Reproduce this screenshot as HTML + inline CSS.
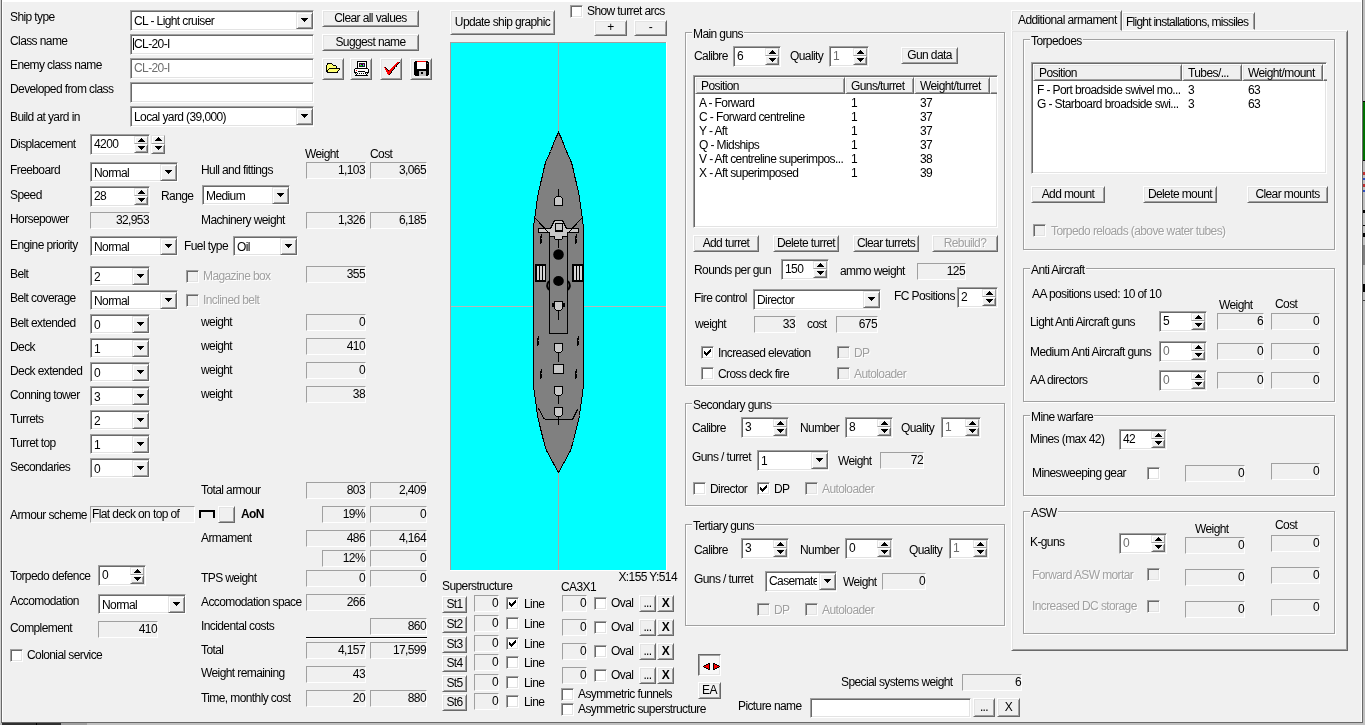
<!DOCTYPE html><html><head><meta charset="utf-8"><style>
html,body{margin:0;padding:0;width:1365px;height:725px;overflow:hidden;background:#f0f0f0;position:relative}
.a{position:absolute;box-sizing:border-box}
.t{position:absolute;font-family:"Liberation Sans",sans-serif;font-size:12px;line-height:13px;white-space:nowrap;color:#000;letter-spacing:-0.6px}
#w{position:absolute;left:0;top:0;width:1365px;height:725px;will-change:transform}
</style></head><body><div id="w">
<div class="a" style="left:0px;top:0px;width:1px;height:725px;background:#d0d0d0;"></div>
<div class="a" style="left:1px;top:0px;width:1px;height:723px;background:#696969;"></div>
<div class="a" style="left:2px;top:0px;width:1px;height:722px;background:#ffffff;"></div>
<div class="a" style="left:2px;top:0px;width:1360px;height:2px;background:#ffffff;"></div>
<div class="a" style="left:1361px;top:0px;width:1px;height:722px;background:#ffffff;"></div>
<div class="a" style="left:1362px;top:0px;width:1px;height:723px;background:#696969;"></div>
<div class="a" style="left:1363px;top:0px;width:2px;height:725px;background:#c0c0c0;"></div>
<div class="a" style="left:1363px;top:101px;width:2px;height:1px;background:#000;"></div>
<div class="a" style="left:1363px;top:102px;width:2px;height:58px;background:#007000;"></div>
<div class="a" style="left:1363px;top:160px;width:2px;height:1px;background:#000;"></div>
<div class="a" style="left:1363px;top:172px;width:2px;height:3px;background:#c03030;"></div>
<div class="a" style="left:1363px;top:178px;width:2px;height:2px;background:#3050c0;"></div>
<div class="a" style="left:1363px;top:184px;width:2px;height:3px;background:#c03030;"></div>
<div class="a" style="left:1363px;top:190px;width:2px;height:2px;background:#3050c0;"></div>
<div class="a" style="left:1363px;top:210px;width:2px;height:3px;background:#000;"></div>
<div class="a" style="left:1363px;top:225px;width:2px;height:1px;background:#000;"></div>
<div class="a" style="left:1363px;top:233px;width:2px;height:4px;background:#000;"></div>
<div class="a" style="left:1363px;top:245px;width:2px;height:20px;background:#808080;"></div>
<div class="a" style="left:1363px;top:284px;width:2px;height:8px;background:#000;"></div>
<div class="a" style="left:1363px;top:300px;width:2px;height:1px;background:#404040;"></div>
<div class="a" style="left:1px;top:722px;width:1362px;height:1px;background:#696969;"></div>
<div class="a" style="left:0px;top:723px;width:1363px;height:2px;background:#c0c0c0;"></div>
<div class="a" style="left:2px;top:723px;width:60px;height:2px;background:#303030;"></div>
<div class="a" style="left:36px;top:723px;width:1px;height:2px;background:#000;"></div>
<div class="a" style="left:61px;top:723px;width:26px;height:2px;background:#a0a0a0;"></div>
<div class="t" style="left:10px;top:11px;color:#000;">Ship type</div>
<div class="t" style="left:10px;top:35px;color:#000;">Class name</div>
<div class="t" style="left:10px;top:59px;color:#000;">Enemy class name</div>
<div class="t" style="left:10px;top:83px;color:#000;">Developed from class</div>
<div class="t" style="left:10px;top:111px;color:#000;">Build at yard in</div>
<div class="t" style="left:10px;top:138px;color:#000;">Displacement</div>
<div class="t" style="left:10px;top:164px;color:#000;">Freeboard</div>
<div class="t" style="left:10px;top:189px;color:#000;">Speed</div>
<div class="t" style="left:10px;top:213px;color:#000;">Horsepower</div>
<div class="t" style="left:10px;top:239px;color:#000;">Engine priority</div>
<div class="t" style="left:10px;top:268px;color:#000;">Belt</div>
<div class="t" style="left:10px;top:292px;color:#000;">Belt coverage</div>
<div class="t" style="left:10px;top:317px;color:#000;">Belt extended</div>
<div class="t" style="left:10px;top:341px;color:#000;">Deck</div>
<div class="t" style="left:10px;top:365px;color:#000;">Deck extended</div>
<div class="t" style="left:10px;top:389px;color:#000;">Conning tower</div>
<div class="t" style="left:10px;top:413px;color:#000;">Turrets</div>
<div class="t" style="left:10px;top:437px;color:#000;">Turret top</div>
<div class="t" style="left:10px;top:461px;color:#000;">Secondaries</div>
<div class="t" style="left:10px;top:509px;color:#000;">Armour scheme</div>
<div class="t" style="left:10px;top:570px;color:#000;">Torpedo defence</div>
<div class="t" style="left:10px;top:595px;color:#000;">Accomodation</div>
<div class="t" style="left:10px;top:622px;color:#000;">Complement</div>
<div class="a" style="left:130px;top:10px;width:184px;height:21px;border:1px solid;border-color:#a0a0a0 #ffffff #ffffff #a0a0a0;box-shadow:inset 1px 1px 0 #696969,inset -1px -1px 0 #e3e3e3;background:#fff;"></div>
<div class="a" style="left:296px;top:12px;width:17px;height:17px;border:1px solid;border-color:#e3e3e3 #696969 #696969 #e3e3e3;box-shadow:inset 1px 1px 0 #ffffff,inset -1px -1px 0 #a0a0a0;background:#f0f0f0;"></div>
<div class="a" style="left:301px;top:18px;width:7px;height:1px;background:#000;"></div>
<div class="a" style="left:302px;top:19px;width:5px;height:1px;background:#000;"></div>
<div class="a" style="left:303px;top:20px;width:3px;height:1px;background:#000;"></div>
<div class="a" style="left:304px;top:21px;width:1px;height:1px;background:#000;"></div>
<div class="t" style="left:134px;top:15px;color:#000;">CL - Light cruiser</div>
<div class="a" style="left:130px;top:34px;width:184px;height:21px;border:1px solid;border-color:#a0a0a0 #ffffff #ffffff #a0a0a0;box-shadow:inset 1px 1px 0 #696969,inset -1px -1px 0 #e3e3e3;background:#fff;"></div>
<div class="t" style="left:134px;top:38px;color:#000;">CL-20-I</div>
<div class="a" style="left:133px;top:38px;width:1px;height:12px;background:#000;"></div>
<div class="a" style="left:130px;top:58px;width:184px;height:21px;border:1px solid;border-color:#a0a0a0 #ffffff #ffffff #a0a0a0;box-shadow:inset 1px 1px 0 #696969,inset -1px -1px 0 #e3e3e3;background:#fff;"></div>
<div class="t" style="left:134px;top:62px;color:#6d6d6d;">CL-20-I</div>
<div class="a" style="left:130px;top:82px;width:184px;height:21px;border:1px solid;border-color:#a0a0a0 #ffffff #ffffff #a0a0a0;box-shadow:inset 1px 1px 0 #696969,inset -1px -1px 0 #e3e3e3;background:#fff;"></div>
<div class="a" style="left:130px;top:106px;width:184px;height:21px;border:1px solid;border-color:#a0a0a0 #ffffff #ffffff #a0a0a0;box-shadow:inset 1px 1px 0 #696969,inset -1px -1px 0 #e3e3e3;background:#fff;"></div>
<div class="a" style="left:296px;top:108px;width:17px;height:17px;border:1px solid;border-color:#e3e3e3 #696969 #696969 #e3e3e3;box-shadow:inset 1px 1px 0 #ffffff,inset -1px -1px 0 #a0a0a0;background:#f0f0f0;"></div>
<div class="a" style="left:301px;top:114px;width:7px;height:1px;background:#000;"></div>
<div class="a" style="left:302px;top:115px;width:5px;height:1px;background:#000;"></div>
<div class="a" style="left:303px;top:116px;width:3px;height:1px;background:#000;"></div>
<div class="a" style="left:304px;top:117px;width:1px;height:1px;background:#000;"></div>
<div class="t" style="left:134px;top:111px;color:#000;">Local yard (39,000)</div>
<div class="a" style="left:322px;top:10px;width:97px;height:17px;border:1px solid;border-color:#ffffff #696969 #696969 #ffffff;box-shadow:inset 1px 1px 0 #e3e3e3,inset -1px -1px 0 #a0a0a0;background:#f0f0f0;"></div>
<div class="t" style="left:322px;top:12px;width:97px;text-align:center;color:#000;">Clear all values</div>
<div class="a" style="left:322px;top:34px;width:97px;height:17px;border:1px solid;border-color:#ffffff #696969 #696969 #ffffff;box-shadow:inset 1px 1px 0 #e3e3e3,inset -1px -1px 0 #a0a0a0;background:#f0f0f0;"></div>
<div class="t" style="left:322px;top:36px;width:97px;text-align:center;color:#000;">Suggest name</div>
<div class="a" style="left:322px;top:58px;width:22px;height:22px;border:1px solid;border-color:#ffffff #696969 #696969 #ffffff;box-shadow:inset 1px 1px 0 #e3e3e3,inset -1px -1px 0 #a0a0a0;background:#f0f0f0;"></div>
<div class="a" style="left:350px;top:58px;width:22px;height:22px;border:1px solid;border-color:#ffffff #696969 #696969 #ffffff;box-shadow:inset 1px 1px 0 #e3e3e3,inset -1px -1px 0 #a0a0a0;background:#f0f0f0;"></div>
<div class="a" style="left:380px;top:58px;width:22px;height:22px;border:1px solid;border-color:#ffffff #696969 #696969 #ffffff;box-shadow:inset 1px 1px 0 #e3e3e3,inset -1px -1px 0 #a0a0a0;background:#f0f0f0;"></div>
<div class="a" style="left:410px;top:58px;width:22px;height:22px;border:1px solid;border-color:#ffffff #696969 #696969 #ffffff;box-shadow:inset 1px 1px 0 #e3e3e3,inset -1px -1px 0 #a0a0a0;background:#f0f0f0;"></div>
<svg class="a" style="left:326px;top:63px" width="15" height="10" shape-rendering="crispEdges"><rect x="1" y="0" width="5" height="1" fill="#000"/><rect x="1" y="1" width="1" height="1" fill="#000"/><rect x="2" y="1" width="4" height="1" fill="#ffff70"/><rect x="6" y="1" width="1" height="1" fill="#000"/><rect x="0" y="2" width="1" height="1" fill="#000"/><rect x="1" y="2" width="6" height="1" fill="#ffff70"/><rect x="7" y="2" width="3" height="1" fill="#000"/><rect x="0" y="3" width="1" height="1" fill="#000"/><rect x="1" y="3" width="9" height="1" fill="#ffff70"/><rect x="10" y="3" width="1" height="1" fill="#000"/><rect x="0" y="4" width="1" height="1" fill="#000"/><rect x="1" y="4" width="9" height="1" fill="#ffff70"/><rect x="10" y="4" width="1" height="1" fill="#000"/><rect x="0" y="5" width="1" height="1" fill="#000"/><rect x="1" y="5" width="2" height="1" fill="#ffff70"/><rect x="3" y="5" width="11" height="1" fill="#000"/><rect x="0" y="6" width="1" height="1" fill="#000"/><rect x="1" y="6" width="1" height="1" fill="#ffff70"/><rect x="2" y="6" width="1" height="1" fill="#000"/><rect x="3" y="6" width="10" height="1" fill="#ffff70"/><rect x="13" y="6" width="1" height="1" fill="#000"/><rect x="0" y="7" width="2" height="1" fill="#000"/><rect x="2" y="7" width="10" height="1" fill="#ffff70"/><rect x="12" y="7" width="1" height="1" fill="#000"/><rect x="0" y="8" width="2" height="1" fill="#000"/><rect x="2" y="8" width="9" height="1" fill="#ffff70"/><rect x="11" y="8" width="1" height="1" fill="#000"/><rect x="1" y="9" width="11" height="1" fill="#000"/></svg>
<svg class="a" style="left:354px;top:61px" width="15" height="15" shape-rendering="crispEdges"><rect x="3" y="0" width="10" height="1" fill="#000"/><rect x="3" y="1" width="1" height="1" fill="#000"/><rect x="4" y="1" width="8" height="1" fill="#fff"/><rect x="12" y="1" width="1" height="1" fill="#000"/><rect x="3" y="2" width="1" height="1" fill="#000"/><rect x="4" y="2" width="1" height="1" fill="#fff"/><rect x="5" y="2" width="6" height="1" fill="#202020"/><rect x="11" y="2" width="1" height="1" fill="#fff"/><rect x="12" y="2" width="1" height="1" fill="#000"/><rect x="3" y="3" width="1" height="1" fill="#000"/><rect x="4" y="3" width="1" height="1" fill="#fff"/><rect x="5" y="3" width="1" height="1" fill="#202020"/><rect x="6" y="3" width="1" height="1" fill="#ff00ff"/><rect x="7" y="3" width="2" height="1" fill="#202020"/><rect x="9" y="3" width="1" height="1" fill="#ff00ff"/><rect x="10" y="3" width="1" height="1" fill="#202020"/><rect x="11" y="3" width="1" height="1" fill="#fff"/><rect x="12" y="3" width="1" height="1" fill="#000"/><rect x="3" y="4" width="1" height="1" fill="#000"/><rect x="4" y="4" width="1" height="1" fill="#fff"/><rect x="5" y="4" width="1" height="1" fill="#202020"/><rect x="6" y="4" width="2" height="1" fill="#00ff00"/><rect x="8" y="4" width="1" height="1" fill="#202020"/><rect x="9" y="4" width="1" height="1" fill="#00ffff"/><rect x="10" y="4" width="1" height="1" fill="#202020"/><rect x="11" y="4" width="1" height="1" fill="#fff"/><rect x="12" y="4" width="1" height="1" fill="#000"/><rect x="3" y="5" width="1" height="1" fill="#000"/><rect x="4" y="5" width="1" height="1" fill="#fff"/><rect x="5" y="5" width="6" height="1" fill="#202020"/><rect x="11" y="5" width="1" height="1" fill="#fff"/><rect x="12" y="5" width="1" height="1" fill="#000"/><rect x="3" y="6" width="1" height="1" fill="#000"/><rect x="4" y="6" width="8" height="1" fill="#fff"/><rect x="12" y="6" width="1" height="1" fill="#000"/><rect x="1" y="7" width="13" height="1" fill="#000"/><rect x="0" y="8" width="1" height="1" fill="#000"/><rect x="1" y="8" width="13" height="1" fill="#fff"/><rect x="14" y="8" width="1" height="1" fill="#000"/><rect x="0" y="9" width="1" height="1" fill="#000"/><rect x="1" y="9" width="1" height="1" fill="#fff"/><rect x="2" y="9" width="1" height="1" fill="#ff0000"/><rect x="3" y="9" width="11" height="1" fill="#fff"/><rect x="14" y="9" width="1" height="1" fill="#000"/><rect x="0" y="10" width="1" height="1" fill="#000"/><rect x="1" y="10" width="3" height="1" fill="#fff"/><rect x="4" y="10" width="7" height="1" fill="#000"/><rect x="11" y="10" width="3" height="1" fill="#fff"/><rect x="14" y="10" width="1" height="1" fill="#000"/><rect x="0" y="11" width="3" height="1" fill="#000"/><rect x="3" y="11" width="8" height="1" fill="#fff"/><rect x="11" y="11" width="4" height="1" fill="#000"/><rect x="1" y="12" width="1" height="1" fill="#000"/><rect x="2" y="12" width="1" height="1" fill="#fff"/><rect x="3" y="12" width="1" height="1" fill="#000"/><rect x="4" y="12" width="1" height="1" fill="#fff"/><rect x="5" y="12" width="1" height="1" fill="#000"/><rect x="6" y="12" width="1" height="1" fill="#fff"/><rect x="7" y="12" width="1" height="1" fill="#000"/><rect x="8" y="12" width="1" height="1" fill="#fff"/><rect x="9" y="12" width="1" height="1" fill="#000"/><rect x="10" y="12" width="1" height="1" fill="#fff"/><rect x="11" y="12" width="1" height="1" fill="#000"/><rect x="12" y="12" width="1" height="1" fill="#fff"/><rect x="13" y="12" width="1" height="1" fill="#000"/><rect x="2" y="13" width="1" height="1" fill="#000"/><rect x="3" y="13" width="9" height="1" fill="#fff"/><rect x="12" y="13" width="1" height="1" fill="#000"/><rect x="1" y="14" width="13" height="1" fill="#000"/></svg>
<svg class="a" style="left:384px;top:62px" width="16" height="13" shape-rendering="crispEdges"><rect x="13" y="0" width="2" height="1" fill="#ff0000"/><rect x="15" y="0" width="1" height="1" fill="#000"/><rect x="12" y="1" width="2" height="1" fill="#ff0000"/><rect x="14" y="1" width="1" height="1" fill="#000"/><rect x="11" y="2" width="2" height="1" fill="#ff0000"/><rect x="13" y="2" width="1" height="1" fill="#000"/><rect x="10" y="3" width="2" height="1" fill="#ff0000"/><rect x="12" y="3" width="1" height="1" fill="#000"/><rect x="9" y="4" width="3" height="1" fill="#ff0000"/><rect x="12" y="4" width="1" height="1" fill="#000"/><rect x="0" y="5" width="1" height="1" fill="#ff0000"/><rect x="1" y="5" width="1" height="1" fill="#000"/><rect x="8" y="5" width="2" height="1" fill="#ff0000"/><rect x="10" y="5" width="1" height="1" fill="#000"/><rect x="1" y="6" width="1" height="1" fill="#ff0000"/><rect x="2" y="6" width="1" height="1" fill="#000"/><rect x="7" y="6" width="3" height="1" fill="#ff0000"/><rect x="10" y="6" width="1" height="1" fill="#000"/><rect x="1" y="7" width="2" height="1" fill="#ff0000"/><rect x="3" y="7" width="1" height="1" fill="#000"/><rect x="6" y="7" width="3" height="1" fill="#ff0000"/><rect x="9" y="7" width="1" height="1" fill="#000"/><rect x="2" y="8" width="2" height="1" fill="#ff0000"/><rect x="4" y="8" width="1" height="1" fill="#000"/><rect x="5" y="8" width="3" height="1" fill="#ff0000"/><rect x="8" y="8" width="1" height="1" fill="#000"/><rect x="2" y="9" width="5" height="1" fill="#ff0000"/><rect x="7" y="9" width="1" height="1" fill="#000"/><rect x="3" y="10" width="4" height="1" fill="#ff0000"/><rect x="7" y="10" width="1" height="1" fill="#000"/><rect x="3" y="11" width="3" height="1" fill="#ff0000"/><rect x="6" y="11" width="1" height="1" fill="#000"/><rect x="4" y="12" width="1" height="1" fill="#ff0000"/><rect x="5" y="12" width="1" height="1" fill="#000"/></svg>
<svg class="a" style="left:414px;top:61px" width="15" height="15" shape-rendering="crispEdges"><rect x="1" y="0" width="2" height="1" fill="#000"/><rect x="3" y="0" width="9" height="1" fill="#ff0000"/><rect x="12" y="0" width="2" height="1" fill="#000"/><rect x="0" y="1" width="3" height="1" fill="#000"/><rect x="3" y="1" width="9" height="1" fill="#fff"/><rect x="12" y="1" width="3" height="1" fill="#000"/><rect x="0" y="2" width="3" height="1" fill="#000"/><rect x="3" y="2" width="9" height="1" fill="#fff"/><rect x="12" y="2" width="1" height="1" fill="#000"/><rect x="13" y="2" width="1" height="1" fill="#808080"/><rect x="14" y="2" width="1" height="1" fill="#000"/><rect x="0" y="3" width="3" height="1" fill="#000"/><rect x="3" y="3" width="9" height="1" fill="#fff"/><rect x="12" y="3" width="3" height="1" fill="#000"/><rect x="0" y="4" width="3" height="1" fill="#000"/><rect x="3" y="4" width="9" height="1" fill="#fff"/><rect x="12" y="4" width="3" height="1" fill="#000"/><rect x="0" y="5" width="3" height="1" fill="#000"/><rect x="3" y="5" width="9" height="1" fill="#fff"/><rect x="12" y="5" width="3" height="1" fill="#000"/><rect x="0" y="6" width="3" height="1" fill="#000"/><rect x="3" y="6" width="9" height="1" fill="#fff"/><rect x="12" y="6" width="3" height="1" fill="#000"/><rect x="0" y="7" width="3" height="1" fill="#000"/><rect x="3" y="7" width="9" height="1" fill="#fff"/><rect x="12" y="7" width="3" height="1" fill="#000"/><rect x="0" y="8" width="15" height="1" fill="#000"/><rect x="0" y="9" width="15" height="1" fill="#000"/><rect x="0" y="10" width="5" height="1" fill="#000"/><rect x="5" y="10" width="7" height="1" fill="#c0c0c0"/><rect x="12" y="10" width="3" height="1" fill="#000"/><rect x="0" y="11" width="5" height="1" fill="#000"/><rect x="5" y="11" width="2" height="1" fill="#c0c0c0"/><rect x="7" y="11" width="2" height="1" fill="#000"/><rect x="9" y="11" width="3" height="1" fill="#c0c0c0"/><rect x="12" y="11" width="3" height="1" fill="#000"/><rect x="0" y="12" width="5" height="1" fill="#000"/><rect x="5" y="12" width="2" height="1" fill="#c0c0c0"/><rect x="7" y="12" width="2" height="1" fill="#000"/><rect x="9" y="12" width="3" height="1" fill="#c0c0c0"/><rect x="12" y="12" width="3" height="1" fill="#000"/><rect x="0" y="13" width="5" height="1" fill="#000"/><rect x="5" y="13" width="7" height="1" fill="#c0c0c0"/><rect x="12" y="13" width="3" height="1" fill="#000"/><rect x="1" y="14" width="4" height="1" fill="#000"/><rect x="5" y="14" width="7" height="1" fill="#c0c0c0"/><rect x="12" y="14" width="2" height="1" fill="#000"/></svg>
<div class="a" style="left:90px;top:134px;width:60px;height:21px;border:1px solid;border-color:#a0a0a0 #ffffff #ffffff #a0a0a0;box-shadow:inset 1px 1px 0 #696969,inset -1px -1px 0 #e3e3e3;background:#fff;"></div>
<div class="a" style="left:134px;top:136px;width:14px;height:8px;border:1px solid;border-color:#e3e3e3 #a0a0a0 #a0a0a0 #e3e3e3;box-shadow:inset 1px 1px 0 #ffffff,inset -1px -1px 0 #f0f0f0;background:#f0f0f0;"></div>
<div class="a" style="left:141px;top:138px;width:1px;height:1px;background:#000;"></div>
<div class="a" style="left:140px;top:139px;width:3px;height:1px;background:#000;"></div>
<div class="a" style="left:139px;top:140px;width:5px;height:1px;background:#000;"></div>
<div class="a" style="left:138px;top:141px;width:7px;height:1px;background:#000;"></div>
<div class="a" style="left:134px;top:144px;width:14px;height:9px;border:1px solid;border-color:#ffffff #696969 #696969 #ffffff;box-shadow:inset 1px 1px 0 #f0f0f0,inset -1px -1px 0 #a0a0a0;background:#f0f0f0;"></div>
<div class="a" style="left:138px;top:146px;width:7px;height:1px;background:#000;"></div>
<div class="a" style="left:139px;top:147px;width:5px;height:1px;background:#000;"></div>
<div class="a" style="left:140px;top:148px;width:3px;height:1px;background:#000;"></div>
<div class="a" style="left:141px;top:149px;width:1px;height:1px;background:#000;"></div>
<div class="t" style="left:94px;top:138px;color:#000;">4200</div>
<div class="a" style="left:151px;top:135px;width:14px;height:9px;border:1px solid;border-color:#e3e3e3 #a0a0a0 #a0a0a0 #e3e3e3;box-shadow:inset 1px 1px 0 #ffffff,inset -1px -1px 0 #f0f0f0;background:#f0f0f0;"></div>
<div class="a" style="left:158px;top:137px;width:1px;height:1px;background:#000;"></div>
<div class="a" style="left:157px;top:138px;width:3px;height:1px;background:#000;"></div>
<div class="a" style="left:156px;top:139px;width:5px;height:1px;background:#000;"></div>
<div class="a" style="left:155px;top:140px;width:7px;height:1px;background:#000;"></div>
<div class="a" style="left:151px;top:144px;width:14px;height:10px;border:1px solid;border-color:#ffffff #696969 #696969 #ffffff;box-shadow:inset 1px 1px 0 #f0f0f0,inset -1px -1px 0 #a0a0a0;background:#f0f0f0;"></div>
<div class="a" style="left:155px;top:146px;width:7px;height:1px;background:#000;"></div>
<div class="a" style="left:156px;top:147px;width:5px;height:1px;background:#000;"></div>
<div class="a" style="left:157px;top:148px;width:3px;height:1px;background:#000;"></div>
<div class="a" style="left:158px;top:149px;width:1px;height:1px;background:#000;"></div>
<div class="a" style="left:90px;top:162px;width:88px;height:20px;border:1px solid;border-color:#a0a0a0 #ffffff #ffffff #a0a0a0;box-shadow:inset 1px 1px 0 #696969,inset -1px -1px 0 #e3e3e3;background:#fff;"></div>
<div class="a" style="left:160px;top:164px;width:17px;height:17px;border:1px solid;border-color:#e3e3e3 #696969 #696969 #e3e3e3;box-shadow:inset 1px 1px 0 #ffffff,inset -1px -1px 0 #a0a0a0;background:#f0f0f0;"></div>
<div class="a" style="left:165px;top:170px;width:7px;height:1px;background:#000;"></div>
<div class="a" style="left:166px;top:171px;width:5px;height:1px;background:#000;"></div>
<div class="a" style="left:167px;top:172px;width:3px;height:1px;background:#000;"></div>
<div class="a" style="left:168px;top:173px;width:1px;height:1px;background:#000;"></div>
<div class="t" style="left:94px;top:167px;color:#000;">Normal</div>
<div class="t" style="left:305px;top:148px;color:#000;">Weight</div>
<div class="t" style="left:370px;top:148px;color:#000;">Cost</div>
<div class="t" style="left:201px;top:164px;color:#000;">Hull and fittings</div>
<div class="a" style="left:306px;top:162px;width:60px;height:17px;border:1px solid;border-color:#a0a0a0 #ffffff #ffffff #a0a0a0;background:#f0f0f0"></div>
<div class="t" style="right:1000px;top:164px;color:#000">1,103</div>
<div class="a" style="left:370px;top:162px;width:57px;height:17px;border:1px solid;border-color:#a0a0a0 #ffffff #ffffff #a0a0a0;background:#f0f0f0"></div>
<div class="t" style="right:939px;top:164px;color:#000">3,065</div>
<div class="a" style="left:90px;top:186px;width:60px;height:21px;border:1px solid;border-color:#a0a0a0 #ffffff #ffffff #a0a0a0;box-shadow:inset 1px 1px 0 #696969,inset -1px -1px 0 #e3e3e3;background:#fff;"></div>
<div class="a" style="left:134px;top:188px;width:14px;height:8px;border:1px solid;border-color:#e3e3e3 #a0a0a0 #a0a0a0 #e3e3e3;box-shadow:inset 1px 1px 0 #ffffff,inset -1px -1px 0 #f0f0f0;background:#f0f0f0;"></div>
<div class="a" style="left:141px;top:190px;width:1px;height:1px;background:#000;"></div>
<div class="a" style="left:140px;top:191px;width:3px;height:1px;background:#000;"></div>
<div class="a" style="left:139px;top:192px;width:5px;height:1px;background:#000;"></div>
<div class="a" style="left:138px;top:193px;width:7px;height:1px;background:#000;"></div>
<div class="a" style="left:134px;top:196px;width:14px;height:9px;border:1px solid;border-color:#ffffff #696969 #696969 #ffffff;box-shadow:inset 1px 1px 0 #f0f0f0,inset -1px -1px 0 #a0a0a0;background:#f0f0f0;"></div>
<div class="a" style="left:138px;top:198px;width:7px;height:1px;background:#000;"></div>
<div class="a" style="left:139px;top:199px;width:5px;height:1px;background:#000;"></div>
<div class="a" style="left:140px;top:200px;width:3px;height:1px;background:#000;"></div>
<div class="a" style="left:141px;top:201px;width:1px;height:1px;background:#000;"></div>
<div class="t" style="left:94px;top:190px;color:#000;">28</div>
<div class="t" style="left:161px;top:190px;color:#000;">Range</div>
<div class="a" style="left:202px;top:185px;width:88px;height:20px;border:1px solid;border-color:#a0a0a0 #ffffff #ffffff #a0a0a0;box-shadow:inset 1px 1px 0 #696969,inset -1px -1px 0 #e3e3e3;background:#fff;"></div>
<div class="a" style="left:272px;top:187px;width:17px;height:17px;border:1px solid;border-color:#e3e3e3 #696969 #696969 #e3e3e3;box-shadow:inset 1px 1px 0 #ffffff,inset -1px -1px 0 #a0a0a0;background:#f0f0f0;"></div>
<div class="a" style="left:277px;top:193px;width:7px;height:1px;background:#000;"></div>
<div class="a" style="left:278px;top:194px;width:5px;height:1px;background:#000;"></div>
<div class="a" style="left:279px;top:195px;width:3px;height:1px;background:#000;"></div>
<div class="a" style="left:280px;top:196px;width:1px;height:1px;background:#000;"></div>
<div class="t" style="left:206px;top:190px;color:#000;">Medium</div>
<div class="a" style="left:90px;top:212px;width:60px;height:17px;border:1px solid;border-color:#a0a0a0 #ffffff #ffffff #a0a0a0;background:#f0f0f0"></div>
<div class="t" style="right:1216px;top:214px;color:#000">32,953</div>
<div class="t" style="left:201px;top:214px;color:#000;">Machinery weight</div>
<div class="a" style="left:306px;top:212px;width:60px;height:17px;border:1px solid;border-color:#a0a0a0 #ffffff #ffffff #a0a0a0;background:#f0f0f0"></div>
<div class="t" style="right:1000px;top:214px;color:#000">1,326</div>
<div class="a" style="left:370px;top:212px;width:57px;height:17px;border:1px solid;border-color:#a0a0a0 #ffffff #ffffff #a0a0a0;background:#f0f0f0"></div>
<div class="t" style="right:939px;top:214px;color:#000">6,185</div>
<div class="a" style="left:90px;top:236px;width:88px;height:20px;border:1px solid;border-color:#a0a0a0 #ffffff #ffffff #a0a0a0;box-shadow:inset 1px 1px 0 #696969,inset -1px -1px 0 #e3e3e3;background:#fff;"></div>
<div class="a" style="left:160px;top:238px;width:17px;height:17px;border:1px solid;border-color:#e3e3e3 #696969 #696969 #e3e3e3;box-shadow:inset 1px 1px 0 #ffffff,inset -1px -1px 0 #a0a0a0;background:#f0f0f0;"></div>
<div class="a" style="left:165px;top:244px;width:7px;height:1px;background:#000;"></div>
<div class="a" style="left:166px;top:245px;width:5px;height:1px;background:#000;"></div>
<div class="a" style="left:167px;top:246px;width:3px;height:1px;background:#000;"></div>
<div class="a" style="left:168px;top:247px;width:1px;height:1px;background:#000;"></div>
<div class="t" style="left:94px;top:241px;color:#000;">Normal</div>
<div class="t" style="left:184px;top:240px;color:#000;">Fuel type</div>
<div class="a" style="left:233px;top:236px;width:65px;height:20px;border:1px solid;border-color:#a0a0a0 #ffffff #ffffff #a0a0a0;box-shadow:inset 1px 1px 0 #696969,inset -1px -1px 0 #e3e3e3;background:#fff;"></div>
<div class="a" style="left:280px;top:238px;width:17px;height:17px;border:1px solid;border-color:#e3e3e3 #696969 #696969 #e3e3e3;box-shadow:inset 1px 1px 0 #ffffff,inset -1px -1px 0 #a0a0a0;background:#f0f0f0;"></div>
<div class="a" style="left:285px;top:244px;width:7px;height:1px;background:#000;"></div>
<div class="a" style="left:286px;top:245px;width:5px;height:1px;background:#000;"></div>
<div class="a" style="left:287px;top:246px;width:3px;height:1px;background:#000;"></div>
<div class="a" style="left:288px;top:247px;width:1px;height:1px;background:#000;"></div>
<div class="t" style="left:237px;top:241px;color:#000;">Oil</div>
<div class="a" style="left:90px;top:266px;width:60px;height:20px;border:1px solid;border-color:#a0a0a0 #ffffff #ffffff #a0a0a0;box-shadow:inset 1px 1px 0 #696969,inset -1px -1px 0 #e3e3e3;background:#fff;"></div>
<div class="a" style="left:132px;top:268px;width:17px;height:17px;border:1px solid;border-color:#e3e3e3 #696969 #696969 #e3e3e3;box-shadow:inset 1px 1px 0 #ffffff,inset -1px -1px 0 #a0a0a0;background:#f0f0f0;"></div>
<div class="a" style="left:137px;top:274px;width:7px;height:1px;background:#000;"></div>
<div class="a" style="left:138px;top:275px;width:5px;height:1px;background:#000;"></div>
<div class="a" style="left:139px;top:276px;width:3px;height:1px;background:#000;"></div>
<div class="a" style="left:140px;top:277px;width:1px;height:1px;background:#000;"></div>
<div class="t" style="left:94px;top:271px;color:#000;">2</div>
<div class="a" style="left:186px;top:270px;width:13px;height:13px;border:1px solid;border-color:#a0a0a0 #ffffff #ffffff #a0a0a0;box-shadow:inset 1px 1px 0 #696969,inset -1px -1px 0 #e3e3e3;background:#f0f0f0;"></div>
<div class="t" style="left:203px;top:270px;color:#a0a0a0;text-shadow:1px 1px 0 #fff;">Magazine box</div>
<div class="a" style="left:306px;top:266px;width:60px;height:17px;border:1px solid;border-color:#a0a0a0 #ffffff #ffffff #a0a0a0;background:#f0f0f0"></div>
<div class="t" style="right:1000px;top:268px;color:#000">355</div>
<div class="a" style="left:90px;top:290px;width:88px;height:20px;border:1px solid;border-color:#a0a0a0 #ffffff #ffffff #a0a0a0;box-shadow:inset 1px 1px 0 #696969,inset -1px -1px 0 #e3e3e3;background:#fff;"></div>
<div class="a" style="left:160px;top:292px;width:17px;height:17px;border:1px solid;border-color:#e3e3e3 #696969 #696969 #e3e3e3;box-shadow:inset 1px 1px 0 #ffffff,inset -1px -1px 0 #a0a0a0;background:#f0f0f0;"></div>
<div class="a" style="left:165px;top:298px;width:7px;height:1px;background:#000;"></div>
<div class="a" style="left:166px;top:299px;width:5px;height:1px;background:#000;"></div>
<div class="a" style="left:167px;top:300px;width:3px;height:1px;background:#000;"></div>
<div class="a" style="left:168px;top:301px;width:1px;height:1px;background:#000;"></div>
<div class="t" style="left:94px;top:295px;color:#000;">Normal</div>
<div class="a" style="left:186px;top:294px;width:13px;height:13px;border:1px solid;border-color:#a0a0a0 #ffffff #ffffff #a0a0a0;box-shadow:inset 1px 1px 0 #696969,inset -1px -1px 0 #e3e3e3;background:#f0f0f0;"></div>
<div class="t" style="left:203px;top:294px;color:#a0a0a0;text-shadow:1px 1px 0 #fff;">Inclined belt</div>
<div class="a" style="left:90px;top:314px;width:60px;height:20px;border:1px solid;border-color:#a0a0a0 #ffffff #ffffff #a0a0a0;box-shadow:inset 1px 1px 0 #696969,inset -1px -1px 0 #e3e3e3;background:#fff;"></div>
<div class="a" style="left:132px;top:316px;width:17px;height:17px;border:1px solid;border-color:#e3e3e3 #696969 #696969 #e3e3e3;box-shadow:inset 1px 1px 0 #ffffff,inset -1px -1px 0 #a0a0a0;background:#f0f0f0;"></div>
<div class="a" style="left:137px;top:322px;width:7px;height:1px;background:#000;"></div>
<div class="a" style="left:138px;top:323px;width:5px;height:1px;background:#000;"></div>
<div class="a" style="left:139px;top:324px;width:3px;height:1px;background:#000;"></div>
<div class="a" style="left:140px;top:325px;width:1px;height:1px;background:#000;"></div>
<div class="t" style="left:94px;top:319px;color:#000;">0</div>
<div class="t" style="left:201px;top:316px;color:#000;">weight</div>
<div class="a" style="left:306px;top:314px;width:60px;height:17px;border:1px solid;border-color:#a0a0a0 #ffffff #ffffff #a0a0a0;background:#f0f0f0"></div>
<div class="t" style="right:1000px;top:316px;color:#000">0</div>
<div class="a" style="left:90px;top:338px;width:60px;height:20px;border:1px solid;border-color:#a0a0a0 #ffffff #ffffff #a0a0a0;box-shadow:inset 1px 1px 0 #696969,inset -1px -1px 0 #e3e3e3;background:#fff;"></div>
<div class="a" style="left:132px;top:340px;width:17px;height:17px;border:1px solid;border-color:#e3e3e3 #696969 #696969 #e3e3e3;box-shadow:inset 1px 1px 0 #ffffff,inset -1px -1px 0 #a0a0a0;background:#f0f0f0;"></div>
<div class="a" style="left:137px;top:346px;width:7px;height:1px;background:#000;"></div>
<div class="a" style="left:138px;top:347px;width:5px;height:1px;background:#000;"></div>
<div class="a" style="left:139px;top:348px;width:3px;height:1px;background:#000;"></div>
<div class="a" style="left:140px;top:349px;width:1px;height:1px;background:#000;"></div>
<div class="t" style="left:94px;top:343px;color:#000;">1</div>
<div class="t" style="left:201px;top:340px;color:#000;">weight</div>
<div class="a" style="left:306px;top:338px;width:60px;height:17px;border:1px solid;border-color:#a0a0a0 #ffffff #ffffff #a0a0a0;background:#f0f0f0"></div>
<div class="t" style="right:1000px;top:340px;color:#000">410</div>
<div class="a" style="left:90px;top:362px;width:60px;height:20px;border:1px solid;border-color:#a0a0a0 #ffffff #ffffff #a0a0a0;box-shadow:inset 1px 1px 0 #696969,inset -1px -1px 0 #e3e3e3;background:#fff;"></div>
<div class="a" style="left:132px;top:364px;width:17px;height:17px;border:1px solid;border-color:#e3e3e3 #696969 #696969 #e3e3e3;box-shadow:inset 1px 1px 0 #ffffff,inset -1px -1px 0 #a0a0a0;background:#f0f0f0;"></div>
<div class="a" style="left:137px;top:370px;width:7px;height:1px;background:#000;"></div>
<div class="a" style="left:138px;top:371px;width:5px;height:1px;background:#000;"></div>
<div class="a" style="left:139px;top:372px;width:3px;height:1px;background:#000;"></div>
<div class="a" style="left:140px;top:373px;width:1px;height:1px;background:#000;"></div>
<div class="t" style="left:94px;top:367px;color:#000;">0</div>
<div class="t" style="left:201px;top:364px;color:#000;">weight</div>
<div class="a" style="left:306px;top:362px;width:60px;height:17px;border:1px solid;border-color:#a0a0a0 #ffffff #ffffff #a0a0a0;background:#f0f0f0"></div>
<div class="t" style="right:1000px;top:364px;color:#000">0</div>
<div class="a" style="left:90px;top:386px;width:60px;height:20px;border:1px solid;border-color:#a0a0a0 #ffffff #ffffff #a0a0a0;box-shadow:inset 1px 1px 0 #696969,inset -1px -1px 0 #e3e3e3;background:#fff;"></div>
<div class="a" style="left:132px;top:388px;width:17px;height:17px;border:1px solid;border-color:#e3e3e3 #696969 #696969 #e3e3e3;box-shadow:inset 1px 1px 0 #ffffff,inset -1px -1px 0 #a0a0a0;background:#f0f0f0;"></div>
<div class="a" style="left:137px;top:394px;width:7px;height:1px;background:#000;"></div>
<div class="a" style="left:138px;top:395px;width:5px;height:1px;background:#000;"></div>
<div class="a" style="left:139px;top:396px;width:3px;height:1px;background:#000;"></div>
<div class="a" style="left:140px;top:397px;width:1px;height:1px;background:#000;"></div>
<div class="t" style="left:94px;top:391px;color:#000;">3</div>
<div class="t" style="left:201px;top:388px;color:#000;">weight</div>
<div class="a" style="left:306px;top:386px;width:60px;height:17px;border:1px solid;border-color:#a0a0a0 #ffffff #ffffff #a0a0a0;background:#f0f0f0"></div>
<div class="t" style="right:1000px;top:388px;color:#000">38</div>
<div class="a" style="left:90px;top:410px;width:60px;height:20px;border:1px solid;border-color:#a0a0a0 #ffffff #ffffff #a0a0a0;box-shadow:inset 1px 1px 0 #696969,inset -1px -1px 0 #e3e3e3;background:#fff;"></div>
<div class="a" style="left:132px;top:412px;width:17px;height:17px;border:1px solid;border-color:#e3e3e3 #696969 #696969 #e3e3e3;box-shadow:inset 1px 1px 0 #ffffff,inset -1px -1px 0 #a0a0a0;background:#f0f0f0;"></div>
<div class="a" style="left:137px;top:418px;width:7px;height:1px;background:#000;"></div>
<div class="a" style="left:138px;top:419px;width:5px;height:1px;background:#000;"></div>
<div class="a" style="left:139px;top:420px;width:3px;height:1px;background:#000;"></div>
<div class="a" style="left:140px;top:421px;width:1px;height:1px;background:#000;"></div>
<div class="t" style="left:94px;top:415px;color:#000;">2</div>
<div class="a" style="left:90px;top:434px;width:60px;height:20px;border:1px solid;border-color:#a0a0a0 #ffffff #ffffff #a0a0a0;box-shadow:inset 1px 1px 0 #696969,inset -1px -1px 0 #e3e3e3;background:#fff;"></div>
<div class="a" style="left:132px;top:436px;width:17px;height:17px;border:1px solid;border-color:#e3e3e3 #696969 #696969 #e3e3e3;box-shadow:inset 1px 1px 0 #ffffff,inset -1px -1px 0 #a0a0a0;background:#f0f0f0;"></div>
<div class="a" style="left:137px;top:442px;width:7px;height:1px;background:#000;"></div>
<div class="a" style="left:138px;top:443px;width:5px;height:1px;background:#000;"></div>
<div class="a" style="left:139px;top:444px;width:3px;height:1px;background:#000;"></div>
<div class="a" style="left:140px;top:445px;width:1px;height:1px;background:#000;"></div>
<div class="t" style="left:94px;top:439px;color:#000;">1</div>
<div class="a" style="left:90px;top:458px;width:60px;height:20px;border:1px solid;border-color:#a0a0a0 #ffffff #ffffff #a0a0a0;box-shadow:inset 1px 1px 0 #696969,inset -1px -1px 0 #e3e3e3;background:#fff;"></div>
<div class="a" style="left:132px;top:460px;width:17px;height:17px;border:1px solid;border-color:#e3e3e3 #696969 #696969 #e3e3e3;box-shadow:inset 1px 1px 0 #ffffff,inset -1px -1px 0 #a0a0a0;background:#f0f0f0;"></div>
<div class="a" style="left:137px;top:466px;width:7px;height:1px;background:#000;"></div>
<div class="a" style="left:138px;top:467px;width:5px;height:1px;background:#000;"></div>
<div class="a" style="left:139px;top:468px;width:3px;height:1px;background:#000;"></div>
<div class="a" style="left:140px;top:469px;width:1px;height:1px;background:#000;"></div>
<div class="t" style="left:94px;top:463px;color:#000;">0</div>
<div class="t" style="left:201px;top:484px;color:#000;">Total armour</div>
<div class="a" style="left:306px;top:482px;width:60px;height:17px;border:1px solid;border-color:#a0a0a0 #ffffff #ffffff #a0a0a0;background:#f0f0f0"></div>
<div class="t" style="right:1000px;top:484px;color:#000">803</div>
<div class="a" style="left:370px;top:482px;width:57px;height:17px;border:1px solid;border-color:#a0a0a0 #ffffff #ffffff #a0a0a0;background:#f0f0f0"></div>
<div class="t" style="right:939px;top:484px;color:#000">2,409</div>
<div class="a" style="left:90px;top:506px;width:105px;height:17px;border:1px solid;border-color:#a0a0a0 #ffffff #ffffff #a0a0a0;background:#f0f0f0"></div>
<div class="t" style="left:92px;top:508px;color:#000;">Flat deck on top of</div>
<div class="a" style="left:199px;top:510px;width:16px;height:2px;background:#000;"></div>
<div class="a" style="left:199px;top:510px;width:2px;height:8px;background:#000;"></div>
<div class="a" style="left:213px;top:510px;width:2px;height:8px;background:#000;"></div>
<div class="a" style="left:218px;top:506px;width:17px;height:17px;border:1px solid;border-color:#ffffff #696969 #696969 #ffffff;box-shadow:inset 1px 1px 0 #e3e3e3,inset -1px -1px 0 #a0a0a0;background:#f0f0f0;"></div>
<div class="t" style="left:241px;top:508px;color:#000;font-weight:bold;">AoN</div>
<div class="a" style="left:322px;top:506px;width:44px;height:17px;border:1px solid;border-color:#a0a0a0 #ffffff #ffffff #a0a0a0;background:#f0f0f0"></div>
<div class="t" style="right:1000px;top:508px;color:#000">19%</div>
<div class="a" style="left:370px;top:506px;width:57px;height:17px;border:1px solid;border-color:#a0a0a0 #ffffff #ffffff #a0a0a0;background:#f0f0f0"></div>
<div class="t" style="right:939px;top:508px;color:#000">0</div>
<div class="t" style="left:201px;top:532px;color:#000;">Armament</div>
<div class="a" style="left:306px;top:530px;width:60px;height:17px;border:1px solid;border-color:#a0a0a0 #ffffff #ffffff #a0a0a0;background:#f0f0f0"></div>
<div class="t" style="right:1000px;top:532px;color:#000">486</div>
<div class="a" style="left:370px;top:530px;width:57px;height:17px;border:1px solid;border-color:#a0a0a0 #ffffff #ffffff #a0a0a0;background:#f0f0f0"></div>
<div class="t" style="right:939px;top:532px;color:#000">4,164</div>
<div class="a" style="left:322px;top:550px;width:44px;height:17px;border:1px solid;border-color:#a0a0a0 #ffffff #ffffff #a0a0a0;background:#f0f0f0"></div>
<div class="t" style="right:1000px;top:552px;color:#000">12%</div>
<div class="a" style="left:370px;top:550px;width:57px;height:17px;border:1px solid;border-color:#a0a0a0 #ffffff #ffffff #a0a0a0;background:#f0f0f0"></div>
<div class="t" style="right:939px;top:552px;color:#000">0</div>
<div class="a" style="left:98px;top:565px;width:48px;height:21px;border:1px solid;border-color:#a0a0a0 #ffffff #ffffff #a0a0a0;box-shadow:inset 1px 1px 0 #696969,inset -1px -1px 0 #e3e3e3;background:#fff;"></div>
<div class="a" style="left:130px;top:567px;width:14px;height:8px;border:1px solid;border-color:#e3e3e3 #a0a0a0 #a0a0a0 #e3e3e3;box-shadow:inset 1px 1px 0 #ffffff,inset -1px -1px 0 #f0f0f0;background:#f0f0f0;"></div>
<div class="a" style="left:137px;top:569px;width:1px;height:1px;background:#000;"></div>
<div class="a" style="left:136px;top:570px;width:3px;height:1px;background:#000;"></div>
<div class="a" style="left:135px;top:571px;width:5px;height:1px;background:#000;"></div>
<div class="a" style="left:134px;top:572px;width:7px;height:1px;background:#000;"></div>
<div class="a" style="left:130px;top:575px;width:14px;height:9px;border:1px solid;border-color:#ffffff #696969 #696969 #ffffff;box-shadow:inset 1px 1px 0 #f0f0f0,inset -1px -1px 0 #a0a0a0;background:#f0f0f0;"></div>
<div class="a" style="left:134px;top:577px;width:7px;height:1px;background:#000;"></div>
<div class="a" style="left:135px;top:578px;width:5px;height:1px;background:#000;"></div>
<div class="a" style="left:136px;top:579px;width:3px;height:1px;background:#000;"></div>
<div class="a" style="left:137px;top:580px;width:1px;height:1px;background:#000;"></div>
<div class="t" style="left:102px;top:569px;color:#000;">0</div>
<div class="t" style="left:201px;top:572px;color:#000;">TPS weight</div>
<div class="a" style="left:306px;top:570px;width:60px;height:17px;border:1px solid;border-color:#a0a0a0 #ffffff #ffffff #a0a0a0;background:#f0f0f0"></div>
<div class="t" style="right:1000px;top:572px;color:#000">0</div>
<div class="a" style="left:370px;top:570px;width:57px;height:17px;border:1px solid;border-color:#a0a0a0 #ffffff #ffffff #a0a0a0;background:#f0f0f0"></div>
<div class="t" style="right:939px;top:572px;color:#000">0</div>
<div class="a" style="left:98px;top:594px;width:88px;height:20px;border:1px solid;border-color:#a0a0a0 #ffffff #ffffff #a0a0a0;box-shadow:inset 1px 1px 0 #696969,inset -1px -1px 0 #e3e3e3;background:#fff;"></div>
<div class="a" style="left:168px;top:596px;width:17px;height:17px;border:1px solid;border-color:#e3e3e3 #696969 #696969 #e3e3e3;box-shadow:inset 1px 1px 0 #ffffff,inset -1px -1px 0 #a0a0a0;background:#f0f0f0;"></div>
<div class="a" style="left:173px;top:602px;width:7px;height:1px;background:#000;"></div>
<div class="a" style="left:174px;top:603px;width:5px;height:1px;background:#000;"></div>
<div class="a" style="left:175px;top:604px;width:3px;height:1px;background:#000;"></div>
<div class="a" style="left:176px;top:605px;width:1px;height:1px;background:#000;"></div>
<div class="t" style="left:102px;top:599px;color:#000;">Normal</div>
<div class="t" style="left:201px;top:596px;color:#000;">Accomodation space</div>
<div class="a" style="left:306px;top:594px;width:60px;height:17px;border:1px solid;border-color:#a0a0a0 #ffffff #ffffff #a0a0a0;background:#f0f0f0"></div>
<div class="t" style="right:1000px;top:596px;color:#000">266</div>
<div class="a" style="left:98px;top:621px;width:60px;height:17px;border:1px solid;border-color:#a0a0a0 #ffffff #ffffff #a0a0a0;background:#f0f0f0"></div>
<div class="t" style="right:1208px;top:623px;color:#000">410</div>
<div class="t" style="left:201px;top:620px;color:#000;">Incidental costs</div>
<div class="a" style="left:370px;top:618px;width:57px;height:17px;border:1px solid;border-color:#a0a0a0 #ffffff #ffffff #a0a0a0;background:#f0f0f0"></div>
<div class="t" style="right:939px;top:620px;color:#000">860</div>
<div class="a" style="left:306px;top:637px;width:121px;height:1px;background:#000;"></div>
<div class="a" style="left:306px;top:638px;width:121px;height:1px;background:#fff;"></div>
<div class="a" style="left:10px;top:649px;width:13px;height:13px;border:1px solid;border-color:#a0a0a0 #ffffff #ffffff #a0a0a0;box-shadow:inset 1px 1px 0 #696969,inset -1px -1px 0 #e3e3e3;background:#fff;"></div>
<div class="t" style="left:27px;top:649px;color:#000;">Colonial service</div>
<div class="t" style="left:201px;top:644px;color:#000;">Total</div>
<div class="a" style="left:306px;top:642px;width:60px;height:17px;border:1px solid;border-color:#a0a0a0 #ffffff #ffffff #a0a0a0;background:#f0f0f0"></div>
<div class="t" style="right:1000px;top:644px;color:#000">4,157</div>
<div class="a" style="left:370px;top:642px;width:57px;height:17px;border:1px solid;border-color:#a0a0a0 #ffffff #ffffff #a0a0a0;background:#f0f0f0"></div>
<div class="t" style="right:939px;top:644px;color:#000">17,599</div>
<div class="t" style="left:201px;top:667px;color:#000;">Weight remaining</div>
<div class="a" style="left:306px;top:666px;width:60px;height:17px;border:1px solid;border-color:#a0a0a0 #ffffff #ffffff #a0a0a0;background:#f0f0f0"></div>
<div class="t" style="right:1000px;top:668px;color:#000">43</div>
<div class="t" style="left:201px;top:692px;color:#000;">Time, monthly cost</div>
<div class="a" style="left:306px;top:690px;width:60px;height:17px;border:1px solid;border-color:#a0a0a0 #ffffff #ffffff #a0a0a0;background:#f0f0f0"></div>
<div class="t" style="right:1000px;top:692px;color:#000">20</div>
<div class="a" style="left:370px;top:690px;width:57px;height:17px;border:1px solid;border-color:#a0a0a0 #ffffff #ffffff #a0a0a0;background:#f0f0f0"></div>
<div class="t" style="right:939px;top:692px;color:#000">880</div>
<div class="a" style="left:450px;top:10px;width:105px;height:25px;border:1px solid;border-color:#ffffff #696969 #696969 #ffffff;box-shadow:inset 1px 1px 0 #e3e3e3,inset -1px -1px 0 #a0a0a0;background:#f0f0f0;"></div>
<div class="t" style="left:450px;top:16px;width:105px;text-align:center;color:#000;">Update ship graphic</div>
<div class="a" style="left:570px;top:5px;width:13px;height:13px;border:1px solid;border-color:#a0a0a0 #ffffff #ffffff #a0a0a0;box-shadow:inset 1px 1px 0 #696969,inset -1px -1px 0 #e3e3e3;background:#fff;"></div>
<div class="t" style="left:587px;top:5px;color:#000;">Show turret arcs</div>
<div class="a" style="left:594px;top:20px;width:33px;height:16px;border:1px solid;border-color:#ffffff #696969 #696969 #ffffff;box-shadow:inset 1px 1px 0 #e3e3e3,inset -1px -1px 0 #a0a0a0;background:#f0f0f0;"></div>
<div class="t" style="left:594px;top:21px;width:33px;text-align:center;color:#000;">+</div>
<div class="a" style="left:634px;top:20px;width:33px;height:16px;border:1px solid;border-color:#ffffff #696969 #696969 #ffffff;box-shadow:inset 1px 1px 0 #e3e3e3,inset -1px -1px 0 #a0a0a0;background:#f0f0f0;"></div>
<div class="t" style="left:634px;top:21px;width:33px;text-align:center;color:#000;">-</div>
<div class="a" style="left:450px;top:42px;width:217px;height:529px"><svg width="217" height="529" viewBox="0 0 217 529" style="position:absolute;left:0;top:0">
<rect x="0" y="0" width="217" height="529" fill="#ffffff"/>
<rect x="0" y="0" width="216" height="528" fill="#a0a0a0"/>
<rect x="1" y="1" width="215" height="527" fill="#00ffff"/>
<g shape-rendering="crispEdges">
<rect x="108" y="1" width="1" height="527" fill="#a8a8a8"/>
<rect x="1" y="264" width="215" height="1" fill="#b8b8b8"/>
<polygon points="108.5,90.5 105.5,96.5 100.5,109.5 95.5,120.5 93.5,128.5 92.5,133.5 90.5,141.5 88.5,150.5 87.5,155.5 86.5,163.5 85.5,170.5 84.5,177.5 83.5,185.5 83.5,343.5 84.5,351.5 85.5,358.5 86.5,365.5 87.5,373.5 89.5,382.5 93.5,398.5 96.5,408.5 103.5,421.5 108.5,430.5 113.5,421.5 120.5,408.5 123.5,398.5 127.5,382.5 129.5,373.5 130.5,365.5 131.5,358.5 132.5,351.5 133.5,343.5 133.5,185.5 132.5,177.5 131.5,170.5 130.5,163.5 129.5,155.5 128.5,150.5 126.5,141.5 124.5,133.5 123.5,128.5 121.5,120.5 116.5,109.5 111.5,96.5" fill="#808080" stroke="#000" stroke-width="1"/>
<line x1="99.5" y1="192.5" x2="99.5" y2="291.5" stroke="#000" stroke-width="1"/>
<line x1="117.5" y1="192.5" x2="117.5" y2="291.5" stroke="#000" stroke-width="1"/>
<line x1="99.5" y1="291.5" x2="117.5" y2="291.5" stroke="#000" stroke-width="1"/>
<polygon points="104.5,178.5 112.5,178.5 116.5,186.5 128.5,186.5 128.5,190.5 117.5,190.5 117.5,194.5 112.5,194.5 112.5,196.5 111.5,197.5 105.5,197.5 104.5,196.5 104.5,194.5 99.5,194.5 99.5,190.5 88.5,190.5 88.5,186.5 100.5,186.5" fill="#c8c8c8" stroke="#000"/>
<rect x="105.5" y="181.5" width="7" height="7" fill="#c8c8c8" stroke="#000"/>
<line x1="104.5" y1="189.5" x2="112.5" y2="189.5" stroke="#000" stroke-width="1"/>
<line x1="85.5" y1="176.5" x2="99.5" y2="191.5" stroke="#000" stroke-width="1"/>
<line x1="131.5" y1="176.5" x2="117.5" y2="191.5" stroke="#000" stroke-width="1"/>
<line x1="108.5" y1="197.5" x2="108.5" y2="205.5" stroke="#000" stroke-width="1"/>
</g>
<ellipse cx="108.5" cy="212.5" rx="5.3" ry="5.3" fill="#000"/>
<ellipse cx="108.5" cy="239" rx="5.3" ry="5" fill="#000"/>
<path d="M99 239 Q95.5 243.5 99 248" fill="none" stroke="#000" stroke-width="2"/>
<path d="M118 239 Q121.5 243.5 118 248" fill="none" stroke="#000" stroke-width="2"/>
<g shape-rendering="crispEdges">
<rect x="85" y="222" width="11" height="18" fill="#000"/>
<rect x="87" y="224" width="2" height="14" fill="#d4d4d4"/>
<rect x="90" y="224" width="2" height="14" fill="#d4d4d4"/>
<rect x="93" y="224" width="2" height="14" fill="#d4d4d4"/>
<rect x="122" y="222" width="11" height="18" fill="#000"/>
<rect x="124" y="224" width="2" height="14" fill="#d4d4d4"/>
<rect x="127" y="224" width="2" height="14" fill="#d4d4d4"/>
<rect x="130" y="224" width="2" height="14" fill="#d4d4d4"/>
<polygon points="106.5,154.5 110.5,154.5 112.5,156.5 112.5,163.5 104.5,163.5 104.5,156.5" fill="#c8c8c8" stroke="#000"/>
<line x1="108.5" y1="146.5" x2="108.5" y2="154.5" stroke="#000" stroke-width="1"/>
<polygon points="104.5,259.5 112.5,259.5 112.5,266.5 110.5,268.5 106.5,268.5 104.5,266.5" fill="#c8c8c8" stroke="#000"/>
<line x1="108.5" y1="268.5" x2="108.5" y2="277.5" stroke="#000" stroke-width="1"/>
<rect x="102" y="261" width="2" height="4" fill="#000"/>
<rect x="113" y="261" width="2" height="4" fill="#000"/>
<polygon points="104.5,301.5 112.5,301.5 112.5,308.5 110.5,310.5 106.5,310.5 104.5,308.5" fill="#c8c8c8" stroke="#000"/>
<line x1="108.5" y1="310.5" x2="108.5" y2="319.5" stroke="#000" stroke-width="1"/>
<rect x="103.5" y="322.5" width="10" height="9" fill="#c8c8c8" stroke="#000"/>
<polygon points="104.5,344.5 112.5,344.5 112.5,351.5 110.5,353.5 106.5,353.5 104.5,351.5" fill="#c8c8c8" stroke="#000"/>
<line x1="108.5" y1="353.5" x2="108.5" y2="361.5" stroke="#000" stroke-width="1"/>
<polygon points="104.5,365.5 112.5,365.5 112.5,372.5 110.5,374.5 106.5,374.5 104.5,372.5" fill="#c8c8c8" stroke="#000"/>
<line x1="108.5" y1="374.5" x2="108.5" y2="382.5" stroke="#000" stroke-width="1"/>
<line x1="88.5" y1="366.5" x2="94.5" y2="377.5" stroke="#000" stroke-width="1"/>
<line x1="94.5" y1="377.5" x2="122.5" y2="377.5" stroke="#000" stroke-width="1"/>
<line x1="122.5" y1="377.5" x2="127.5" y2="367.5" stroke="#000" stroke-width="1"/>
<rect x="90" y="194" width="1" height="8" fill="#000"/>
<rect x="91" y="192" width="1" height="4" fill="#000"/>
<rect x="91" y="197" width="1" height="4" fill="#000"/>
<rect x="125" y="194" width="1" height="8" fill="#000"/>
<rect x="126" y="192" width="1" height="4" fill="#000"/>
<rect x="126" y="197" width="1" height="4" fill="#000"/>
<rect x="87" y="296" width="1" height="8" fill="#000"/>
<rect x="88" y="294" width="1" height="4" fill="#000"/>
<rect x="88" y="299" width="1" height="4" fill="#000"/>
<rect x="127" y="296" width="1" height="8" fill="#000"/>
<rect x="128" y="294" width="1" height="4" fill="#000"/>
<rect x="128" y="299" width="1" height="4" fill="#000"/>
<rect x="90" y="329" width="1" height="8" fill="#000"/>
<rect x="91" y="327" width="1" height="4" fill="#000"/>
<rect x="91" y="332" width="1" height="4" fill="#000"/>
<rect x="125" y="329" width="1" height="8" fill="#000"/>
<rect x="126" y="327" width="1" height="4" fill="#000"/>
<rect x="126" y="332" width="1" height="4" fill="#000"/>
</g></svg></div>
<div class="t" style="right:688px;top:571px;color:#000">X:155 Y:514</div>
<div class="t" style="left:442px;top:580px;color:#000;">Superstructure</div>
<div class="a" style="left:442px;top:596px;width:25px;height:17px;border:1px solid;border-color:#ffffff #696969 #696969 #ffffff;box-shadow:inset 1px 1px 0 #e3e3e3,inset -1px -1px 0 #a0a0a0;background:#f0f0f0;"></div>
<div class="t" style="left:442px;top:598px;width:25px;text-align:center;color:#000;">St1</div>
<div class="a" style="left:474px;top:595px;width:25px;height:17px;border:1px solid;border-color:#a0a0a0 #ffffff #ffffff #a0a0a0;background:#f0f0f0"></div>
<div class="t" style="right:867px;top:597px;color:#000">0</div>
<div class="a" style="left:506px;top:597px;width:13px;height:13px;border:1px solid;border-color:#a0a0a0 #ffffff #ffffff #a0a0a0;box-shadow:inset 1px 1px 0 #696969,inset -1px -1px 0 #e3e3e3;background:#fff;"></div>
<div class="a" style="left:509px;top:602px;width:1px;height:1px;background:#000;"></div>
<div class="a" style="left:509px;top:603px;width:1px;height:1px;background:#000;"></div>
<div class="a" style="left:509px;top:604px;width:1px;height:1px;background:#000;"></div>
<div class="a" style="left:510px;top:603px;width:1px;height:1px;background:#000;"></div>
<div class="a" style="left:510px;top:604px;width:1px;height:1px;background:#000;"></div>
<div class="a" style="left:510px;top:605px;width:1px;height:1px;background:#000;"></div>
<div class="a" style="left:511px;top:604px;width:1px;height:1px;background:#000;"></div>
<div class="a" style="left:511px;top:605px;width:1px;height:1px;background:#000;"></div>
<div class="a" style="left:511px;top:606px;width:1px;height:1px;background:#000;"></div>
<div class="a" style="left:512px;top:603px;width:1px;height:1px;background:#000;"></div>
<div class="a" style="left:512px;top:604px;width:1px;height:1px;background:#000;"></div>
<div class="a" style="left:512px;top:605px;width:1px;height:1px;background:#000;"></div>
<div class="a" style="left:513px;top:602px;width:1px;height:1px;background:#000;"></div>
<div class="a" style="left:513px;top:603px;width:1px;height:1px;background:#000;"></div>
<div class="a" style="left:513px;top:604px;width:1px;height:1px;background:#000;"></div>
<div class="a" style="left:514px;top:601px;width:1px;height:1px;background:#000;"></div>
<div class="a" style="left:514px;top:602px;width:1px;height:1px;background:#000;"></div>
<div class="a" style="left:514px;top:603px;width:1px;height:1px;background:#000;"></div>
<div class="a" style="left:515px;top:600px;width:1px;height:1px;background:#000;"></div>
<div class="a" style="left:515px;top:601px;width:1px;height:1px;background:#000;"></div>
<div class="a" style="left:515px;top:602px;width:1px;height:1px;background:#000;"></div>
<div class="t" style="left:524px;top:598px;color:#000;">Line</div>
<div class="a" style="left:442px;top:616px;width:25px;height:17px;border:1px solid;border-color:#ffffff #696969 #696969 #ffffff;box-shadow:inset 1px 1px 0 #e3e3e3,inset -1px -1px 0 #a0a0a0;background:#f0f0f0;"></div>
<div class="t" style="left:442px;top:618px;width:25px;text-align:center;color:#000;">St2</div>
<div class="a" style="left:474px;top:615px;width:25px;height:17px;border:1px solid;border-color:#a0a0a0 #ffffff #ffffff #a0a0a0;background:#f0f0f0"></div>
<div class="t" style="right:867px;top:617px;color:#000">0</div>
<div class="a" style="left:506px;top:617px;width:13px;height:13px;border:1px solid;border-color:#a0a0a0 #ffffff #ffffff #a0a0a0;box-shadow:inset 1px 1px 0 #696969,inset -1px -1px 0 #e3e3e3;background:#fff;"></div>
<div class="t" style="left:524px;top:618px;color:#000;">Line</div>
<div class="a" style="left:442px;top:636px;width:25px;height:17px;border:1px solid;border-color:#ffffff #696969 #696969 #ffffff;box-shadow:inset 1px 1px 0 #e3e3e3,inset -1px -1px 0 #a0a0a0;background:#f0f0f0;"></div>
<div class="t" style="left:442px;top:638px;width:25px;text-align:center;color:#000;">St3</div>
<div class="a" style="left:474px;top:635px;width:25px;height:17px;border:1px solid;border-color:#a0a0a0 #ffffff #ffffff #a0a0a0;background:#f0f0f0"></div>
<div class="t" style="right:867px;top:637px;color:#000">0</div>
<div class="a" style="left:506px;top:637px;width:13px;height:13px;border:1px solid;border-color:#a0a0a0 #ffffff #ffffff #a0a0a0;box-shadow:inset 1px 1px 0 #696969,inset -1px -1px 0 #e3e3e3;background:#fff;"></div>
<div class="a" style="left:509px;top:642px;width:1px;height:1px;background:#000;"></div>
<div class="a" style="left:509px;top:643px;width:1px;height:1px;background:#000;"></div>
<div class="a" style="left:509px;top:644px;width:1px;height:1px;background:#000;"></div>
<div class="a" style="left:510px;top:643px;width:1px;height:1px;background:#000;"></div>
<div class="a" style="left:510px;top:644px;width:1px;height:1px;background:#000;"></div>
<div class="a" style="left:510px;top:645px;width:1px;height:1px;background:#000;"></div>
<div class="a" style="left:511px;top:644px;width:1px;height:1px;background:#000;"></div>
<div class="a" style="left:511px;top:645px;width:1px;height:1px;background:#000;"></div>
<div class="a" style="left:511px;top:646px;width:1px;height:1px;background:#000;"></div>
<div class="a" style="left:512px;top:643px;width:1px;height:1px;background:#000;"></div>
<div class="a" style="left:512px;top:644px;width:1px;height:1px;background:#000;"></div>
<div class="a" style="left:512px;top:645px;width:1px;height:1px;background:#000;"></div>
<div class="a" style="left:513px;top:642px;width:1px;height:1px;background:#000;"></div>
<div class="a" style="left:513px;top:643px;width:1px;height:1px;background:#000;"></div>
<div class="a" style="left:513px;top:644px;width:1px;height:1px;background:#000;"></div>
<div class="a" style="left:514px;top:641px;width:1px;height:1px;background:#000;"></div>
<div class="a" style="left:514px;top:642px;width:1px;height:1px;background:#000;"></div>
<div class="a" style="left:514px;top:643px;width:1px;height:1px;background:#000;"></div>
<div class="a" style="left:515px;top:640px;width:1px;height:1px;background:#000;"></div>
<div class="a" style="left:515px;top:641px;width:1px;height:1px;background:#000;"></div>
<div class="a" style="left:515px;top:642px;width:1px;height:1px;background:#000;"></div>
<div class="t" style="left:524px;top:638px;color:#000;">Line</div>
<div class="a" style="left:442px;top:655px;width:25px;height:17px;border:1px solid;border-color:#ffffff #696969 #696969 #ffffff;box-shadow:inset 1px 1px 0 #e3e3e3,inset -1px -1px 0 #a0a0a0;background:#f0f0f0;"></div>
<div class="t" style="left:442px;top:657px;width:25px;text-align:center;color:#000;">St4</div>
<div class="a" style="left:474px;top:654px;width:25px;height:17px;border:1px solid;border-color:#a0a0a0 #ffffff #ffffff #a0a0a0;background:#f0f0f0"></div>
<div class="t" style="right:867px;top:656px;color:#000">0</div>
<div class="a" style="left:506px;top:656px;width:13px;height:13px;border:1px solid;border-color:#a0a0a0 #ffffff #ffffff #a0a0a0;box-shadow:inset 1px 1px 0 #696969,inset -1px -1px 0 #e3e3e3;background:#fff;"></div>
<div class="t" style="left:524px;top:657px;color:#000;">Line</div>
<div class="a" style="left:442px;top:675px;width:25px;height:17px;border:1px solid;border-color:#ffffff #696969 #696969 #ffffff;box-shadow:inset 1px 1px 0 #e3e3e3,inset -1px -1px 0 #a0a0a0;background:#f0f0f0;"></div>
<div class="t" style="left:442px;top:677px;width:25px;text-align:center;color:#000;">St5</div>
<div class="a" style="left:474px;top:674px;width:25px;height:17px;border:1px solid;border-color:#a0a0a0 #ffffff #ffffff #a0a0a0;background:#f0f0f0"></div>
<div class="t" style="right:867px;top:676px;color:#000">0</div>
<div class="a" style="left:506px;top:676px;width:13px;height:13px;border:1px solid;border-color:#a0a0a0 #ffffff #ffffff #a0a0a0;box-shadow:inset 1px 1px 0 #696969,inset -1px -1px 0 #e3e3e3;background:#fff;"></div>
<div class="t" style="left:524px;top:677px;color:#000;">Line</div>
<div class="a" style="left:442px;top:694px;width:25px;height:17px;border:1px solid;border-color:#ffffff #696969 #696969 #ffffff;box-shadow:inset 1px 1px 0 #e3e3e3,inset -1px -1px 0 #a0a0a0;background:#f0f0f0;"></div>
<div class="t" style="left:442px;top:696px;width:25px;text-align:center;color:#000;">St6</div>
<div class="a" style="left:474px;top:693px;width:25px;height:17px;border:1px solid;border-color:#a0a0a0 #ffffff #ffffff #a0a0a0;background:#f0f0f0"></div>
<div class="t" style="right:867px;top:695px;color:#000">0</div>
<div class="a" style="left:506px;top:695px;width:13px;height:13px;border:1px solid;border-color:#a0a0a0 #ffffff #ffffff #a0a0a0;box-shadow:inset 1px 1px 0 #696969,inset -1px -1px 0 #e3e3e3;background:#fff;"></div>
<div class="t" style="left:524px;top:696px;color:#000;">Line</div>
<div class="t" style="left:561px;top:581px;color:#000;">CA3X1</div>
<div class="a" style="left:562px;top:595px;width:25px;height:17px;border:1px solid;border-color:#a0a0a0 #ffffff #ffffff #a0a0a0;background:#f0f0f0"></div>
<div class="t" style="right:779px;top:597px;color:#000">0</div>
<div class="a" style="left:594px;top:597px;width:13px;height:13px;border:1px solid;border-color:#a0a0a0 #ffffff #ffffff #a0a0a0;box-shadow:inset 1px 1px 0 #696969,inset -1px -1px 0 #e3e3e3;background:#fff;"></div>
<div class="t" style="left:611px;top:597px;color:#000;">Oval</div>
<div class="a" style="left:639px;top:595px;width:17px;height:17px;border:1px solid;border-color:#ffffff #696969 #696969 #ffffff;box-shadow:inset 1px 1px 0 #e3e3e3,inset -1px -1px 0 #a0a0a0;background:#f0f0f0;"></div>
<div class="t" style="left:639px;top:597px;width:17px;text-align:center;color:#000;">...</div>
<div class="a" style="left:657px;top:595px;width:17px;height:17px;border:1px solid;border-color:#ffffff #696969 #696969 #ffffff;box-shadow:inset 1px 1px 0 #e3e3e3,inset -1px -1px 0 #a0a0a0;background:#f0f0f0;"></div>
<div class="t" style="left:657px;top:597px;width:17px;text-align:center;color:#000;font-weight:bold;">X</div>
<div class="a" style="left:562px;top:619px;width:25px;height:17px;border:1px solid;border-color:#a0a0a0 #ffffff #ffffff #a0a0a0;background:#f0f0f0"></div>
<div class="t" style="right:779px;top:621px;color:#000">0</div>
<div class="a" style="left:594px;top:621px;width:13px;height:13px;border:1px solid;border-color:#a0a0a0 #ffffff #ffffff #a0a0a0;box-shadow:inset 1px 1px 0 #696969,inset -1px -1px 0 #e3e3e3;background:#fff;"></div>
<div class="t" style="left:611px;top:621px;color:#000;">Oval</div>
<div class="a" style="left:639px;top:619px;width:17px;height:17px;border:1px solid;border-color:#ffffff #696969 #696969 #ffffff;box-shadow:inset 1px 1px 0 #e3e3e3,inset -1px -1px 0 #a0a0a0;background:#f0f0f0;"></div>
<div class="t" style="left:639px;top:621px;width:17px;text-align:center;color:#000;">...</div>
<div class="a" style="left:657px;top:619px;width:17px;height:17px;border:1px solid;border-color:#ffffff #696969 #696969 #ffffff;box-shadow:inset 1px 1px 0 #e3e3e3,inset -1px -1px 0 #a0a0a0;background:#f0f0f0;"></div>
<div class="t" style="left:657px;top:621px;width:17px;text-align:center;color:#000;font-weight:bold;">X</div>
<div class="a" style="left:562px;top:643px;width:25px;height:17px;border:1px solid;border-color:#a0a0a0 #ffffff #ffffff #a0a0a0;background:#f0f0f0"></div>
<div class="t" style="right:779px;top:645px;color:#000">0</div>
<div class="a" style="left:594px;top:645px;width:13px;height:13px;border:1px solid;border-color:#a0a0a0 #ffffff #ffffff #a0a0a0;box-shadow:inset 1px 1px 0 #696969,inset -1px -1px 0 #e3e3e3;background:#fff;"></div>
<div class="t" style="left:611px;top:645px;color:#000;">Oval</div>
<div class="a" style="left:639px;top:643px;width:17px;height:17px;border:1px solid;border-color:#ffffff #696969 #696969 #ffffff;box-shadow:inset 1px 1px 0 #e3e3e3,inset -1px -1px 0 #a0a0a0;background:#f0f0f0;"></div>
<div class="t" style="left:639px;top:645px;width:17px;text-align:center;color:#000;">...</div>
<div class="a" style="left:657px;top:643px;width:17px;height:17px;border:1px solid;border-color:#ffffff #696969 #696969 #ffffff;box-shadow:inset 1px 1px 0 #e3e3e3,inset -1px -1px 0 #a0a0a0;background:#f0f0f0;"></div>
<div class="t" style="left:657px;top:645px;width:17px;text-align:center;color:#000;font-weight:bold;">X</div>
<div class="a" style="left:562px;top:667px;width:25px;height:17px;border:1px solid;border-color:#a0a0a0 #ffffff #ffffff #a0a0a0;background:#f0f0f0"></div>
<div class="t" style="right:779px;top:669px;color:#000">0</div>
<div class="a" style="left:594px;top:669px;width:13px;height:13px;border:1px solid;border-color:#a0a0a0 #ffffff #ffffff #a0a0a0;box-shadow:inset 1px 1px 0 #696969,inset -1px -1px 0 #e3e3e3;background:#fff;"></div>
<div class="t" style="left:611px;top:669px;color:#000;">Oval</div>
<div class="a" style="left:639px;top:667px;width:17px;height:17px;border:1px solid;border-color:#ffffff #696969 #696969 #ffffff;box-shadow:inset 1px 1px 0 #e3e3e3,inset -1px -1px 0 #a0a0a0;background:#f0f0f0;"></div>
<div class="t" style="left:639px;top:669px;width:17px;text-align:center;color:#000;">...</div>
<div class="a" style="left:657px;top:667px;width:17px;height:17px;border:1px solid;border-color:#ffffff #696969 #696969 #ffffff;box-shadow:inset 1px 1px 0 #e3e3e3,inset -1px -1px 0 #a0a0a0;background:#f0f0f0;"></div>
<div class="t" style="left:657px;top:669px;width:17px;text-align:center;color:#000;font-weight:bold;">X</div>
<div class="a" style="left:561px;top:688px;width:13px;height:13px;border:1px solid;border-color:#a0a0a0 #ffffff #ffffff #a0a0a0;box-shadow:inset 1px 1px 0 #696969,inset -1px -1px 0 #e3e3e3;background:#fff;"></div>
<div class="t" style="left:578px;top:688px;color:#000;">Asymmetric funnels</div>
<div class="a" style="left:561px;top:703px;width:13px;height:13px;border:1px solid;border-color:#a0a0a0 #ffffff #ffffff #a0a0a0;box-shadow:inset 1px 1px 0 #696969,inset -1px -1px 0 #e3e3e3;background:#fff;"></div>
<div class="t" style="left:578px;top:703px;color:#000;">Asymmetric superstructure</div>
<div class="a" style="left:686px;top:33px;width:320px;height:354px;border:1px solid #ffffff"></div>
<div class="a" style="left:685px;top:32px;width:320px;height:354px;border:1px solid #a0a0a0"></div>
<div class="t" style="left:692px;top:28px;padding:0 1px;background:#f0f0f0">Main guns</div>
<div class="t" style="left:694px;top:50px;color:#000;">Calibre</div>
<div class="a" style="left:733px;top:46px;width:48px;height:21px;border:1px solid;border-color:#a0a0a0 #ffffff #ffffff #a0a0a0;box-shadow:inset 1px 1px 0 #696969,inset -1px -1px 0 #e3e3e3;background:#fff;"></div>
<div class="a" style="left:765px;top:48px;width:14px;height:8px;border:1px solid;border-color:#e3e3e3 #a0a0a0 #a0a0a0 #e3e3e3;box-shadow:inset 1px 1px 0 #ffffff,inset -1px -1px 0 #f0f0f0;background:#f0f0f0;"></div>
<div class="a" style="left:772px;top:50px;width:1px;height:1px;background:#000;"></div>
<div class="a" style="left:771px;top:51px;width:3px;height:1px;background:#000;"></div>
<div class="a" style="left:770px;top:52px;width:5px;height:1px;background:#000;"></div>
<div class="a" style="left:769px;top:53px;width:7px;height:1px;background:#000;"></div>
<div class="a" style="left:765px;top:56px;width:14px;height:9px;border:1px solid;border-color:#ffffff #696969 #696969 #ffffff;box-shadow:inset 1px 1px 0 #f0f0f0,inset -1px -1px 0 #a0a0a0;background:#f0f0f0;"></div>
<div class="a" style="left:769px;top:58px;width:7px;height:1px;background:#000;"></div>
<div class="a" style="left:770px;top:59px;width:5px;height:1px;background:#000;"></div>
<div class="a" style="left:771px;top:60px;width:3px;height:1px;background:#000;"></div>
<div class="a" style="left:772px;top:61px;width:1px;height:1px;background:#000;"></div>
<div class="t" style="left:737px;top:50px;color:#000;">6</div>
<div class="t" style="left:790px;top:50px;color:#000;">Quality</div>
<div class="a" style="left:829px;top:46px;width:40px;height:21px;border:1px solid;border-color:#a0a0a0 #ffffff #ffffff #a0a0a0;box-shadow:inset 1px 1px 0 #696969,inset -1px -1px 0 #e3e3e3;background:#fff;"></div>
<div class="a" style="left:853px;top:48px;width:14px;height:8px;border:1px solid;border-color:#e3e3e3 #a0a0a0 #a0a0a0 #e3e3e3;box-shadow:inset 1px 1px 0 #ffffff,inset -1px -1px 0 #f0f0f0;background:#f0f0f0;"></div>
<div class="a" style="left:860px;top:50px;width:1px;height:1px;background:#000;"></div>
<div class="a" style="left:859px;top:51px;width:3px;height:1px;background:#000;"></div>
<div class="a" style="left:858px;top:52px;width:5px;height:1px;background:#000;"></div>
<div class="a" style="left:857px;top:53px;width:7px;height:1px;background:#000;"></div>
<div class="a" style="left:853px;top:56px;width:14px;height:9px;border:1px solid;border-color:#ffffff #696969 #696969 #ffffff;box-shadow:inset 1px 1px 0 #f0f0f0,inset -1px -1px 0 #a0a0a0;background:#f0f0f0;"></div>
<div class="a" style="left:857px;top:58px;width:7px;height:1px;background:#000;"></div>
<div class="a" style="left:858px;top:59px;width:5px;height:1px;background:#000;"></div>
<div class="a" style="left:859px;top:60px;width:3px;height:1px;background:#000;"></div>
<div class="a" style="left:860px;top:61px;width:1px;height:1px;background:#000;"></div>
<div class="t" style="left:833px;top:50px;color:#6d6d6d;">1</div>
<div class="a" style="left:901px;top:47px;width:57px;height:17px;border:1px solid;border-color:#ffffff #696969 #696969 #ffffff;box-shadow:inset 1px 1px 0 #e3e3e3,inset -1px -1px 0 #a0a0a0;background:#f0f0f0;"></div>
<div class="t" style="left:901px;top:49px;width:57px;text-align:center;color:#000;">Gun data</div>
<div class="a" style="left:693px;top:75px;width:305px;height:153px;border:1px solid;border-color:#a0a0a0 #ffffff #ffffff #a0a0a0;box-shadow:inset 1px 1px 0 #696969,inset -1px -1px 0 #e3e3e3;background:#fff;"></div>
<div class="a" style="left:695px;top:77px;width:150px;height:17px;border:1px solid;border-color:#ffffff #696969 #696969 #ffffff;box-shadow:inset 1px 1px 0 #e3e3e3,inset -1px -1px 0 #a0a0a0;background:#f0f0f0;"></div>
<div class="t" style="left:701px;top:80px;color:#000;">Position</div>
<div class="a" style="left:845px;top:77px;width:69px;height:17px;border:1px solid;border-color:#ffffff #696969 #696969 #ffffff;box-shadow:inset 1px 1px 0 #e3e3e3,inset -1px -1px 0 #a0a0a0;background:#f0f0f0;"></div>
<div class="t" style="left:851px;top:80px;color:#000;">Guns/turret</div>
<div class="a" style="left:914px;top:77px;width:76px;height:17px;border:1px solid;border-color:#ffffff #696969 #696969 #ffffff;box-shadow:inset 1px 1px 0 #e3e3e3,inset -1px -1px 0 #a0a0a0;background:#f0f0f0;"></div>
<div class="t" style="left:920px;top:80px;color:#000;">Weight/turret</div>
<div class="a" style="left:990px;top:77px;width:7px;height:17px;border-left:1px solid #ffffff;border-top:1px solid #ffffff;border-bottom:1px solid #696969;box-shadow:inset 0 -1px 0 #a0a0a0;background:#f0f0f0"></div>
<div class="t" style="left:699px;top:97px;color:#000;">A - Forward</div>
<div class="t" style="left:851px;top:97px;color:#000;">1</div>
<div class="t" style="left:920px;top:97px;color:#000;">37</div>
<div class="t" style="left:699px;top:111px;color:#000;">C - Forward centreline</div>
<div class="t" style="left:851px;top:111px;color:#000;">1</div>
<div class="t" style="left:920px;top:111px;color:#000;">37</div>
<div class="t" style="left:699px;top:125px;color:#000;">Y - Aft</div>
<div class="t" style="left:851px;top:125px;color:#000;">1</div>
<div class="t" style="left:920px;top:125px;color:#000;">37</div>
<div class="t" style="left:699px;top:139px;color:#000;">Q - Midships</div>
<div class="t" style="left:851px;top:139px;color:#000;">1</div>
<div class="t" style="left:920px;top:139px;color:#000;">37</div>
<div class="t" style="left:699px;top:153px;color:#000;">V - Aft centreline superimpos...</div>
<div class="t" style="left:851px;top:153px;color:#000;">1</div>
<div class="t" style="left:920px;top:153px;color:#000;">38</div>
<div class="t" style="left:699px;top:167px;color:#000;">X - Aft superimposed</div>
<div class="t" style="left:851px;top:167px;color:#000;">1</div>
<div class="t" style="left:920px;top:167px;color:#000;">39</div>
<div class="a" style="left:693px;top:235px;width:66px;height:17px;border:1px solid;border-color:#ffffff #696969 #696969 #ffffff;box-shadow:inset 1px 1px 0 #e3e3e3,inset -1px -1px 0 #a0a0a0;background:#f0f0f0;"></div>
<div class="t" style="left:693px;top:237px;width:66px;text-align:center;color:#000;">Add turret</div>
<div class="a" style="left:773px;top:235px;width:66px;height:17px;border:1px solid;border-color:#ffffff #696969 #696969 #ffffff;box-shadow:inset 1px 1px 0 #e3e3e3,inset -1px -1px 0 #a0a0a0;background:#f0f0f0;"></div>
<div class="t" style="left:773px;top:237px;width:66px;text-align:center;color:#000;">Delete turret</div>
<div class="a" style="left:853px;top:235px;width:66px;height:17px;border:1px solid;border-color:#ffffff #696969 #696969 #ffffff;box-shadow:inset 1px 1px 0 #e3e3e3,inset -1px -1px 0 #a0a0a0;background:#f0f0f0;"></div>
<div class="t" style="left:853px;top:237px;width:66px;text-align:center;color:#000;">Clear turrets</div>
<div class="a" style="left:932px;top:235px;width:66px;height:17px;border:1px solid;border-color:#ffffff #696969 #696969 #ffffff;box-shadow:inset 1px 1px 0 #e3e3e3,inset -1px -1px 0 #a0a0a0;background:#f0f0f0;"></div>
<div class="t" style="left:932px;top:237px;width:66px;text-align:center;color:#a0a0a0;text-shadow:1px 1px 0 #fff;">Rebuild?</div>
<div class="t" style="left:694px;top:264px;color:#000;">Rounds per gun</div>
<div class="a" style="left:781px;top:259px;width:48px;height:21px;border:1px solid;border-color:#a0a0a0 #ffffff #ffffff #a0a0a0;box-shadow:inset 1px 1px 0 #696969,inset -1px -1px 0 #e3e3e3;background:#fff;"></div>
<div class="a" style="left:813px;top:261px;width:14px;height:8px;border:1px solid;border-color:#e3e3e3 #a0a0a0 #a0a0a0 #e3e3e3;box-shadow:inset 1px 1px 0 #ffffff,inset -1px -1px 0 #f0f0f0;background:#f0f0f0;"></div>
<div class="a" style="left:820px;top:263px;width:1px;height:1px;background:#000;"></div>
<div class="a" style="left:819px;top:264px;width:3px;height:1px;background:#000;"></div>
<div class="a" style="left:818px;top:265px;width:5px;height:1px;background:#000;"></div>
<div class="a" style="left:817px;top:266px;width:7px;height:1px;background:#000;"></div>
<div class="a" style="left:813px;top:269px;width:14px;height:9px;border:1px solid;border-color:#ffffff #696969 #696969 #ffffff;box-shadow:inset 1px 1px 0 #f0f0f0,inset -1px -1px 0 #a0a0a0;background:#f0f0f0;"></div>
<div class="a" style="left:817px;top:271px;width:7px;height:1px;background:#000;"></div>
<div class="a" style="left:818px;top:272px;width:5px;height:1px;background:#000;"></div>
<div class="a" style="left:819px;top:273px;width:3px;height:1px;background:#000;"></div>
<div class="a" style="left:820px;top:274px;width:1px;height:1px;background:#000;"></div>
<div class="t" style="left:785px;top:263px;color:#000;">150</div>
<div class="t" style="left:840px;top:265px;color:#000;">ammo weight</div>
<div class="a" style="left:917px;top:263px;width:49px;height:17px;border:1px solid;border-color:#a0a0a0 #ffffff #ffffff #a0a0a0;background:#f0f0f0"></div>
<div class="t" style="right:400px;top:265px;color:#000">125</div>
<div class="t" style="left:694px;top:292px;color:#000;">Fire control</div>
<div class="a" style="left:753px;top:289px;width:128px;height:21px;border:1px solid;border-color:#a0a0a0 #ffffff #ffffff #a0a0a0;box-shadow:inset 1px 1px 0 #696969,inset -1px -1px 0 #e3e3e3;background:#fff;"></div>
<div class="a" style="left:863px;top:291px;width:17px;height:17px;border:1px solid;border-color:#e3e3e3 #696969 #696969 #e3e3e3;box-shadow:inset 1px 1px 0 #ffffff,inset -1px -1px 0 #a0a0a0;background:#f0f0f0;"></div>
<div class="a" style="left:868px;top:297px;width:7px;height:1px;background:#000;"></div>
<div class="a" style="left:869px;top:298px;width:5px;height:1px;background:#000;"></div>
<div class="a" style="left:870px;top:299px;width:3px;height:1px;background:#000;"></div>
<div class="a" style="left:871px;top:300px;width:1px;height:1px;background:#000;"></div>
<div class="t" style="left:757px;top:294px;color:#000;">Director</div>
<div class="t" style="left:894px;top:290px;color:#000;">FC Positions</div>
<div class="a" style="left:957px;top:287px;width:41px;height:21px;border:1px solid;border-color:#a0a0a0 #ffffff #ffffff #a0a0a0;box-shadow:inset 1px 1px 0 #696969,inset -1px -1px 0 #e3e3e3;background:#fff;"></div>
<div class="a" style="left:982px;top:289px;width:14px;height:8px;border:1px solid;border-color:#e3e3e3 #a0a0a0 #a0a0a0 #e3e3e3;box-shadow:inset 1px 1px 0 #ffffff,inset -1px -1px 0 #f0f0f0;background:#f0f0f0;"></div>
<div class="a" style="left:989px;top:291px;width:1px;height:1px;background:#000;"></div>
<div class="a" style="left:988px;top:292px;width:3px;height:1px;background:#000;"></div>
<div class="a" style="left:987px;top:293px;width:5px;height:1px;background:#000;"></div>
<div class="a" style="left:986px;top:294px;width:7px;height:1px;background:#000;"></div>
<div class="a" style="left:982px;top:297px;width:14px;height:9px;border:1px solid;border-color:#ffffff #696969 #696969 #ffffff;box-shadow:inset 1px 1px 0 #f0f0f0,inset -1px -1px 0 #a0a0a0;background:#f0f0f0;"></div>
<div class="a" style="left:986px;top:299px;width:7px;height:1px;background:#000;"></div>
<div class="a" style="left:987px;top:300px;width:5px;height:1px;background:#000;"></div>
<div class="a" style="left:988px;top:301px;width:3px;height:1px;background:#000;"></div>
<div class="a" style="left:989px;top:302px;width:1px;height:1px;background:#000;"></div>
<div class="t" style="left:961px;top:291px;color:#000;">2</div>
<div class="t" style="left:695px;top:318px;color:#000;">weight</div>
<div class="a" style="left:754px;top:316px;width:42px;height:17px;border:1px solid;border-color:#a0a0a0 #ffffff #ffffff #a0a0a0;background:#f0f0f0"></div>
<div class="t" style="right:570px;top:318px;color:#000">33</div>
<div class="t" style="left:807px;top:318px;color:#000;">cost</div>
<div class="a" style="left:836px;top:316px;width:42px;height:17px;border:1px solid;border-color:#a0a0a0 #ffffff #ffffff #a0a0a0;background:#f0f0f0"></div>
<div class="t" style="right:488px;top:318px;color:#000">675</div>
<div class="a" style="left:701px;top:346px;width:13px;height:13px;border:1px solid;border-color:#a0a0a0 #ffffff #ffffff #a0a0a0;box-shadow:inset 1px 1px 0 #696969,inset -1px -1px 0 #e3e3e3;background:#fff;"></div>
<div class="a" style="left:704px;top:351px;width:1px;height:1px;background:#000;"></div>
<div class="a" style="left:704px;top:352px;width:1px;height:1px;background:#000;"></div>
<div class="a" style="left:704px;top:353px;width:1px;height:1px;background:#000;"></div>
<div class="a" style="left:705px;top:352px;width:1px;height:1px;background:#000;"></div>
<div class="a" style="left:705px;top:353px;width:1px;height:1px;background:#000;"></div>
<div class="a" style="left:705px;top:354px;width:1px;height:1px;background:#000;"></div>
<div class="a" style="left:706px;top:353px;width:1px;height:1px;background:#000;"></div>
<div class="a" style="left:706px;top:354px;width:1px;height:1px;background:#000;"></div>
<div class="a" style="left:706px;top:355px;width:1px;height:1px;background:#000;"></div>
<div class="a" style="left:707px;top:352px;width:1px;height:1px;background:#000;"></div>
<div class="a" style="left:707px;top:353px;width:1px;height:1px;background:#000;"></div>
<div class="a" style="left:707px;top:354px;width:1px;height:1px;background:#000;"></div>
<div class="a" style="left:708px;top:351px;width:1px;height:1px;background:#000;"></div>
<div class="a" style="left:708px;top:352px;width:1px;height:1px;background:#000;"></div>
<div class="a" style="left:708px;top:353px;width:1px;height:1px;background:#000;"></div>
<div class="a" style="left:709px;top:350px;width:1px;height:1px;background:#000;"></div>
<div class="a" style="left:709px;top:351px;width:1px;height:1px;background:#000;"></div>
<div class="a" style="left:709px;top:352px;width:1px;height:1px;background:#000;"></div>
<div class="a" style="left:710px;top:349px;width:1px;height:1px;background:#000;"></div>
<div class="a" style="left:710px;top:350px;width:1px;height:1px;background:#000;"></div>
<div class="a" style="left:710px;top:351px;width:1px;height:1px;background:#000;"></div>
<div class="t" style="left:718px;top:347px;color:#000;">Increased elevation</div>
<div class="a" style="left:701px;top:367px;width:13px;height:13px;border:1px solid;border-color:#a0a0a0 #ffffff #ffffff #a0a0a0;box-shadow:inset 1px 1px 0 #696969,inset -1px -1px 0 #e3e3e3;background:#fff;"></div>
<div class="t" style="left:718px;top:368px;color:#000;">Cross deck fire</div>
<div class="a" style="left:837px;top:346px;width:13px;height:13px;border:1px solid;border-color:#a0a0a0 #ffffff #ffffff #a0a0a0;box-shadow:inset 1px 1px 0 #696969,inset -1px -1px 0 #e3e3e3;background:#f0f0f0;"></div>
<div class="t" style="left:854px;top:347px;color:#a0a0a0;text-shadow:1px 1px 0 #fff;">DP</div>
<div class="a" style="left:837px;top:367px;width:13px;height:13px;border:1px solid;border-color:#a0a0a0 #ffffff #ffffff #a0a0a0;box-shadow:inset 1px 1px 0 #696969,inset -1px -1px 0 #e3e3e3;background:#f0f0f0;"></div>
<div class="t" style="left:854px;top:368px;color:#a0a0a0;text-shadow:1px 1px 0 #fff;">Autoloader</div>
<div class="a" style="left:686px;top:404px;width:320px;height:103px;border:1px solid #ffffff"></div>
<div class="a" style="left:685px;top:403px;width:320px;height:103px;border:1px solid #a0a0a0"></div>
<div class="t" style="left:692px;top:399px;padding:0 1px;background:#f0f0f0">Secondary guns</div>
<div class="t" style="left:692px;top:422px;color:#000;">Calibre</div>
<div class="a" style="left:741px;top:417px;width:48px;height:21px;border:1px solid;border-color:#a0a0a0 #ffffff #ffffff #a0a0a0;box-shadow:inset 1px 1px 0 #696969,inset -1px -1px 0 #e3e3e3;background:#fff;"></div>
<div class="a" style="left:773px;top:419px;width:14px;height:8px;border:1px solid;border-color:#e3e3e3 #a0a0a0 #a0a0a0 #e3e3e3;box-shadow:inset 1px 1px 0 #ffffff,inset -1px -1px 0 #f0f0f0;background:#f0f0f0;"></div>
<div class="a" style="left:780px;top:421px;width:1px;height:1px;background:#000;"></div>
<div class="a" style="left:779px;top:422px;width:3px;height:1px;background:#000;"></div>
<div class="a" style="left:778px;top:423px;width:5px;height:1px;background:#000;"></div>
<div class="a" style="left:777px;top:424px;width:7px;height:1px;background:#000;"></div>
<div class="a" style="left:773px;top:427px;width:14px;height:9px;border:1px solid;border-color:#ffffff #696969 #696969 #ffffff;box-shadow:inset 1px 1px 0 #f0f0f0,inset -1px -1px 0 #a0a0a0;background:#f0f0f0;"></div>
<div class="a" style="left:777px;top:429px;width:7px;height:1px;background:#000;"></div>
<div class="a" style="left:778px;top:430px;width:5px;height:1px;background:#000;"></div>
<div class="a" style="left:779px;top:431px;width:3px;height:1px;background:#000;"></div>
<div class="a" style="left:780px;top:432px;width:1px;height:1px;background:#000;"></div>
<div class="t" style="left:745px;top:421px;color:#000;">3</div>
<div class="t" style="left:800px;top:422px;color:#000;">Number</div>
<div class="a" style="left:845px;top:417px;width:48px;height:21px;border:1px solid;border-color:#a0a0a0 #ffffff #ffffff #a0a0a0;box-shadow:inset 1px 1px 0 #696969,inset -1px -1px 0 #e3e3e3;background:#fff;"></div>
<div class="a" style="left:877px;top:419px;width:14px;height:8px;border:1px solid;border-color:#e3e3e3 #a0a0a0 #a0a0a0 #e3e3e3;box-shadow:inset 1px 1px 0 #ffffff,inset -1px -1px 0 #f0f0f0;background:#f0f0f0;"></div>
<div class="a" style="left:884px;top:421px;width:1px;height:1px;background:#000;"></div>
<div class="a" style="left:883px;top:422px;width:3px;height:1px;background:#000;"></div>
<div class="a" style="left:882px;top:423px;width:5px;height:1px;background:#000;"></div>
<div class="a" style="left:881px;top:424px;width:7px;height:1px;background:#000;"></div>
<div class="a" style="left:877px;top:427px;width:14px;height:9px;border:1px solid;border-color:#ffffff #696969 #696969 #ffffff;box-shadow:inset 1px 1px 0 #f0f0f0,inset -1px -1px 0 #a0a0a0;background:#f0f0f0;"></div>
<div class="a" style="left:881px;top:429px;width:7px;height:1px;background:#000;"></div>
<div class="a" style="left:882px;top:430px;width:5px;height:1px;background:#000;"></div>
<div class="a" style="left:883px;top:431px;width:3px;height:1px;background:#000;"></div>
<div class="a" style="left:884px;top:432px;width:1px;height:1px;background:#000;"></div>
<div class="t" style="left:849px;top:421px;color:#000;">8</div>
<div class="t" style="left:901px;top:422px;color:#000;">Quality</div>
<div class="a" style="left:941px;top:417px;width:40px;height:21px;border:1px solid;border-color:#a0a0a0 #ffffff #ffffff #a0a0a0;box-shadow:inset 1px 1px 0 #696969,inset -1px -1px 0 #e3e3e3;background:#fff;"></div>
<div class="a" style="left:965px;top:419px;width:14px;height:8px;border:1px solid;border-color:#e3e3e3 #a0a0a0 #a0a0a0 #e3e3e3;box-shadow:inset 1px 1px 0 #ffffff,inset -1px -1px 0 #f0f0f0;background:#f0f0f0;"></div>
<div class="a" style="left:972px;top:421px;width:1px;height:1px;background:#000;"></div>
<div class="a" style="left:971px;top:422px;width:3px;height:1px;background:#000;"></div>
<div class="a" style="left:970px;top:423px;width:5px;height:1px;background:#000;"></div>
<div class="a" style="left:969px;top:424px;width:7px;height:1px;background:#000;"></div>
<div class="a" style="left:965px;top:427px;width:14px;height:9px;border:1px solid;border-color:#ffffff #696969 #696969 #ffffff;box-shadow:inset 1px 1px 0 #f0f0f0,inset -1px -1px 0 #a0a0a0;background:#f0f0f0;"></div>
<div class="a" style="left:969px;top:429px;width:7px;height:1px;background:#000;"></div>
<div class="a" style="left:970px;top:430px;width:5px;height:1px;background:#000;"></div>
<div class="a" style="left:971px;top:431px;width:3px;height:1px;background:#000;"></div>
<div class="a" style="left:972px;top:432px;width:1px;height:1px;background:#000;"></div>
<div class="t" style="left:945px;top:421px;color:#6d6d6d;">1</div>
<div class="t" style="left:692px;top:451px;color:#000;">Guns / turret</div>
<div class="a" style="left:757px;top:450px;width:72px;height:21px;border:1px solid;border-color:#a0a0a0 #ffffff #ffffff #a0a0a0;box-shadow:inset 1px 1px 0 #696969,inset -1px -1px 0 #e3e3e3;background:#fff;"></div>
<div class="a" style="left:811px;top:452px;width:17px;height:17px;border:1px solid;border-color:#e3e3e3 #696969 #696969 #e3e3e3;box-shadow:inset 1px 1px 0 #ffffff,inset -1px -1px 0 #a0a0a0;background:#f0f0f0;"></div>
<div class="a" style="left:816px;top:458px;width:7px;height:1px;background:#000;"></div>
<div class="a" style="left:817px;top:459px;width:5px;height:1px;background:#000;"></div>
<div class="a" style="left:818px;top:460px;width:3px;height:1px;background:#000;"></div>
<div class="a" style="left:819px;top:461px;width:1px;height:1px;background:#000;"></div>
<div class="t" style="left:761px;top:455px;color:#000;">1</div>
<div class="t" style="left:838px;top:455px;color:#000;">Weight</div>
<div class="a" style="left:880px;top:452px;width:44px;height:17px;border:1px solid;border-color:#a0a0a0 #ffffff #ffffff #a0a0a0;background:#f0f0f0"></div>
<div class="t" style="right:442px;top:454px;color:#000">72</div>
<div class="a" style="left:693px;top:482px;width:13px;height:13px;border:1px solid;border-color:#a0a0a0 #ffffff #ffffff #a0a0a0;box-shadow:inset 1px 1px 0 #696969,inset -1px -1px 0 #e3e3e3;background:#fff;"></div>
<div class="t" style="left:710px;top:483px;color:#000;">Director</div>
<div class="a" style="left:757px;top:482px;width:13px;height:13px;border:1px solid;border-color:#a0a0a0 #ffffff #ffffff #a0a0a0;box-shadow:inset 1px 1px 0 #696969,inset -1px -1px 0 #e3e3e3;background:#fff;"></div>
<div class="a" style="left:760px;top:487px;width:1px;height:1px;background:#000;"></div>
<div class="a" style="left:760px;top:488px;width:1px;height:1px;background:#000;"></div>
<div class="a" style="left:760px;top:489px;width:1px;height:1px;background:#000;"></div>
<div class="a" style="left:761px;top:488px;width:1px;height:1px;background:#000;"></div>
<div class="a" style="left:761px;top:489px;width:1px;height:1px;background:#000;"></div>
<div class="a" style="left:761px;top:490px;width:1px;height:1px;background:#000;"></div>
<div class="a" style="left:762px;top:489px;width:1px;height:1px;background:#000;"></div>
<div class="a" style="left:762px;top:490px;width:1px;height:1px;background:#000;"></div>
<div class="a" style="left:762px;top:491px;width:1px;height:1px;background:#000;"></div>
<div class="a" style="left:763px;top:488px;width:1px;height:1px;background:#000;"></div>
<div class="a" style="left:763px;top:489px;width:1px;height:1px;background:#000;"></div>
<div class="a" style="left:763px;top:490px;width:1px;height:1px;background:#000;"></div>
<div class="a" style="left:764px;top:487px;width:1px;height:1px;background:#000;"></div>
<div class="a" style="left:764px;top:488px;width:1px;height:1px;background:#000;"></div>
<div class="a" style="left:764px;top:489px;width:1px;height:1px;background:#000;"></div>
<div class="a" style="left:765px;top:486px;width:1px;height:1px;background:#000;"></div>
<div class="a" style="left:765px;top:487px;width:1px;height:1px;background:#000;"></div>
<div class="a" style="left:765px;top:488px;width:1px;height:1px;background:#000;"></div>
<div class="a" style="left:766px;top:485px;width:1px;height:1px;background:#000;"></div>
<div class="a" style="left:766px;top:486px;width:1px;height:1px;background:#000;"></div>
<div class="a" style="left:766px;top:487px;width:1px;height:1px;background:#000;"></div>
<div class="t" style="left:774px;top:483px;color:#000;">DP</div>
<div class="a" style="left:805px;top:482px;width:13px;height:13px;border:1px solid;border-color:#a0a0a0 #ffffff #ffffff #a0a0a0;box-shadow:inset 1px 1px 0 #696969,inset -1px -1px 0 #e3e3e3;background:#f0f0f0;"></div>
<div class="t" style="left:822px;top:483px;color:#a0a0a0;text-shadow:1px 1px 0 #fff;">Autoloader</div>
<div class="a" style="left:686px;top:525px;width:320px;height:102px;border:1px solid #ffffff"></div>
<div class="a" style="left:685px;top:524px;width:320px;height:102px;border:1px solid #a0a0a0"></div>
<div class="t" style="left:692px;top:520px;padding:0 1px;background:#f0f0f0">Tertiary guns</div>
<div class="t" style="left:694px;top:544px;color:#000;">Calibre</div>
<div class="a" style="left:741px;top:538px;width:48px;height:21px;border:1px solid;border-color:#a0a0a0 #ffffff #ffffff #a0a0a0;box-shadow:inset 1px 1px 0 #696969,inset -1px -1px 0 #e3e3e3;background:#fff;"></div>
<div class="a" style="left:773px;top:540px;width:14px;height:8px;border:1px solid;border-color:#e3e3e3 #a0a0a0 #a0a0a0 #e3e3e3;box-shadow:inset 1px 1px 0 #ffffff,inset -1px -1px 0 #f0f0f0;background:#f0f0f0;"></div>
<div class="a" style="left:780px;top:542px;width:1px;height:1px;background:#000;"></div>
<div class="a" style="left:779px;top:543px;width:3px;height:1px;background:#000;"></div>
<div class="a" style="left:778px;top:544px;width:5px;height:1px;background:#000;"></div>
<div class="a" style="left:777px;top:545px;width:7px;height:1px;background:#000;"></div>
<div class="a" style="left:773px;top:548px;width:14px;height:9px;border:1px solid;border-color:#ffffff #696969 #696969 #ffffff;box-shadow:inset 1px 1px 0 #f0f0f0,inset -1px -1px 0 #a0a0a0;background:#f0f0f0;"></div>
<div class="a" style="left:777px;top:550px;width:7px;height:1px;background:#000;"></div>
<div class="a" style="left:778px;top:551px;width:5px;height:1px;background:#000;"></div>
<div class="a" style="left:779px;top:552px;width:3px;height:1px;background:#000;"></div>
<div class="a" style="left:780px;top:553px;width:1px;height:1px;background:#000;"></div>
<div class="t" style="left:745px;top:542px;color:#000;">3</div>
<div class="t" style="left:800px;top:544px;color:#000;">Number</div>
<div class="a" style="left:845px;top:538px;width:48px;height:21px;border:1px solid;border-color:#a0a0a0 #ffffff #ffffff #a0a0a0;box-shadow:inset 1px 1px 0 #696969,inset -1px -1px 0 #e3e3e3;background:#fff;"></div>
<div class="a" style="left:877px;top:540px;width:14px;height:8px;border:1px solid;border-color:#e3e3e3 #a0a0a0 #a0a0a0 #e3e3e3;box-shadow:inset 1px 1px 0 #ffffff,inset -1px -1px 0 #f0f0f0;background:#f0f0f0;"></div>
<div class="a" style="left:884px;top:542px;width:1px;height:1px;background:#000;"></div>
<div class="a" style="left:883px;top:543px;width:3px;height:1px;background:#000;"></div>
<div class="a" style="left:882px;top:544px;width:5px;height:1px;background:#000;"></div>
<div class="a" style="left:881px;top:545px;width:7px;height:1px;background:#000;"></div>
<div class="a" style="left:877px;top:548px;width:14px;height:9px;border:1px solid;border-color:#ffffff #696969 #696969 #ffffff;box-shadow:inset 1px 1px 0 #f0f0f0,inset -1px -1px 0 #a0a0a0;background:#f0f0f0;"></div>
<div class="a" style="left:881px;top:550px;width:7px;height:1px;background:#000;"></div>
<div class="a" style="left:882px;top:551px;width:5px;height:1px;background:#000;"></div>
<div class="a" style="left:883px;top:552px;width:3px;height:1px;background:#000;"></div>
<div class="a" style="left:884px;top:553px;width:1px;height:1px;background:#000;"></div>
<div class="t" style="left:849px;top:542px;color:#000;">0</div>
<div class="t" style="left:909px;top:544px;color:#000;">Quality</div>
<div class="a" style="left:949px;top:538px;width:40px;height:21px;border:1px solid;border-color:#a0a0a0 #ffffff #ffffff #a0a0a0;box-shadow:inset 1px 1px 0 #696969,inset -1px -1px 0 #e3e3e3;background:#fff;"></div>
<div class="a" style="left:973px;top:540px;width:14px;height:8px;border:1px solid;border-color:#e3e3e3 #a0a0a0 #a0a0a0 #e3e3e3;box-shadow:inset 1px 1px 0 #ffffff,inset -1px -1px 0 #f0f0f0;background:#f0f0f0;"></div>
<div class="a" style="left:980px;top:542px;width:1px;height:1px;background:#000;"></div>
<div class="a" style="left:979px;top:543px;width:3px;height:1px;background:#000;"></div>
<div class="a" style="left:978px;top:544px;width:5px;height:1px;background:#000;"></div>
<div class="a" style="left:977px;top:545px;width:7px;height:1px;background:#000;"></div>
<div class="a" style="left:973px;top:548px;width:14px;height:9px;border:1px solid;border-color:#ffffff #696969 #696969 #ffffff;box-shadow:inset 1px 1px 0 #f0f0f0,inset -1px -1px 0 #a0a0a0;background:#f0f0f0;"></div>
<div class="a" style="left:977px;top:550px;width:7px;height:1px;background:#000;"></div>
<div class="a" style="left:978px;top:551px;width:5px;height:1px;background:#000;"></div>
<div class="a" style="left:979px;top:552px;width:3px;height:1px;background:#000;"></div>
<div class="a" style="left:980px;top:553px;width:1px;height:1px;background:#000;"></div>
<div class="t" style="left:953px;top:542px;color:#6d6d6d;">1</div>
<div class="t" style="left:694px;top:573px;color:#000;">Guns / turret</div>
<div class="a" style="left:765px;top:571px;width:72px;height:21px;border:1px solid;border-color:#a0a0a0 #ffffff #ffffff #a0a0a0;box-shadow:inset 1px 1px 0 #696969,inset -1px -1px 0 #e3e3e3;background:#fff;"></div>
<div class="a" style="left:819px;top:573px;width:17px;height:17px;border:1px solid;border-color:#e3e3e3 #696969 #696969 #e3e3e3;box-shadow:inset 1px 1px 0 #ffffff,inset -1px -1px 0 #a0a0a0;background:#f0f0f0;"></div>
<div class="a" style="left:824px;top:579px;width:7px;height:1px;background:#000;"></div>
<div class="a" style="left:825px;top:580px;width:5px;height:1px;background:#000;"></div>
<div class="a" style="left:826px;top:581px;width:3px;height:1px;background:#000;"></div>
<div class="a" style="left:827px;top:582px;width:1px;height:1px;background:#000;"></div>
<div class="t" style="left:769px;top:575px;width:48px;overflow:hidden">Casemate:</div>
<div class="t" style="left:843px;top:576px;color:#000;">Weight</div>
<div class="a" style="left:882px;top:573px;width:44px;height:17px;border:1px solid;border-color:#a0a0a0 #ffffff #ffffff #a0a0a0;background:#f0f0f0"></div>
<div class="t" style="right:440px;top:575px;color:#000">0</div>
<div class="a" style="left:757px;top:603px;width:13px;height:13px;border:1px solid;border-color:#a0a0a0 #ffffff #ffffff #a0a0a0;box-shadow:inset 1px 1px 0 #696969,inset -1px -1px 0 #e3e3e3;background:#f0f0f0;"></div>
<div class="t" style="left:774px;top:604px;color:#a0a0a0;text-shadow:1px 1px 0 #fff;">DP</div>
<div class="a" style="left:805px;top:603px;width:13px;height:13px;border:1px solid;border-color:#a0a0a0 #ffffff #ffffff #a0a0a0;box-shadow:inset 1px 1px 0 #696969,inset -1px -1px 0 #e3e3e3;background:#f0f0f0;"></div>
<div class="t" style="left:822px;top:604px;color:#a0a0a0;text-shadow:1px 1px 0 #fff;">Autoloader</div>
<div class="a" style="left:698px;top:654px;width:23px;height:22px;border:1px solid;border-color:#696969 #ffffff #ffffff #696969;box-shadow:inset 1px 1px 0 #a0a0a0,inset -1px -1px 0 #e3e3e3;background:#f7f7f7;"></div>
<svg class="a" style="left:703px;top:663px" width="17" height="7" shape-rendering="crispEdges"><rect x="5" y="0" width="2" height="1" fill="#000"/><rect x="10" y="0" width="2" height="1" fill="#000"/><rect x="3" y="1" width="2" height="1" fill="#000"/><rect x="5" y="1" width="1" height="1" fill="#ff0000"/><rect x="6" y="1" width="1" height="1" fill="#000"/><rect x="10" y="1" width="1" height="1" fill="#000"/><rect x="11" y="1" width="1" height="1" fill="#ff0000"/><rect x="12" y="1" width="2" height="1" fill="#000"/><rect x="1" y="2" width="2" height="1" fill="#000"/><rect x="3" y="2" width="3" height="1" fill="#ff0000"/><rect x="6" y="2" width="1" height="1" fill="#000"/><rect x="10" y="2" width="1" height="1" fill="#000"/><rect x="11" y="2" width="3" height="1" fill="#ff0000"/><rect x="14" y="2" width="2" height="1" fill="#000"/><rect x="0" y="3" width="1" height="1" fill="#000"/><rect x="1" y="3" width="5" height="1" fill="#ff0000"/><rect x="6" y="3" width="1" height="1" fill="#000"/><rect x="10" y="3" width="1" height="1" fill="#000"/><rect x="11" y="3" width="5" height="1" fill="#ff0000"/><rect x="16" y="3" width="1" height="1" fill="#000"/><rect x="1" y="4" width="2" height="1" fill="#000"/><rect x="3" y="4" width="3" height="1" fill="#ff0000"/><rect x="6" y="4" width="1" height="1" fill="#000"/><rect x="10" y="4" width="1" height="1" fill="#000"/><rect x="11" y="4" width="3" height="1" fill="#ff0000"/><rect x="14" y="4" width="2" height="1" fill="#000"/><rect x="3" y="5" width="2" height="1" fill="#000"/><rect x="5" y="5" width="1" height="1" fill="#ff0000"/><rect x="6" y="5" width="1" height="1" fill="#000"/><rect x="10" y="5" width="1" height="1" fill="#000"/><rect x="11" y="5" width="1" height="1" fill="#ff0000"/><rect x="12" y="5" width="2" height="1" fill="#000"/><rect x="5" y="6" width="2" height="1" fill="#000"/><rect x="10" y="6" width="2" height="1" fill="#000"/></svg>
<div class="a" style="left:698px;top:682px;width:23px;height:17px;border:1px solid;border-color:#ffffff #696969 #696969 #ffffff;box-shadow:inset 1px 1px 0 #e3e3e3,inset -1px -1px 0 #a0a0a0;background:#f0f0f0;"></div>
<div class="t" style="left:698px;top:684px;width:23px;text-align:center;color:#000;">EA</div>
<div class="t" style="left:841px;top:676px;color:#000;">Special systems weight</div>
<div class="a" style="left:962px;top:674px;width:60px;height:17px;border:1px solid;border-color:#a0a0a0 #ffffff #ffffff #a0a0a0;background:#f0f0f0"></div>
<div class="t" style="right:344px;top:676px;color:#000">6</div>
<div class="t" style="left:738px;top:700px;color:#000;">Picture name</div>
<div class="a" style="left:810px;top:698px;width:161px;height:20px;border:1px solid;border-color:#a0a0a0 #ffffff #ffffff #a0a0a0;box-shadow:inset 1px 1px 0 #696969,inset -1px -1px 0 #e3e3e3;background:#fff;"></div>
<div class="a" style="left:973px;top:698px;width:22px;height:19px;border:1px solid;border-color:#ffffff #696969 #696969 #ffffff;box-shadow:inset 1px 1px 0 #e3e3e3,inset -1px -1px 0 #a0a0a0;background:#f0f0f0;"></div>
<div class="t" style="left:973px;top:701px;width:22px;text-align:center;color:#000;">...</div>
<div class="a" style="left:997px;top:698px;width:23px;height:19px;border:1px solid;border-color:#ffffff #696969 #696969 #ffffff;box-shadow:inset 1px 1px 0 #e3e3e3,inset -1px -1px 0 #a0a0a0;background:#f0f0f0;"></div>
<div class="t" style="left:997px;top:701px;width:23px;text-align:center;color:#000;">X</div>
<div class="a" style="left:1011px;top:30px;width:337px;height:621px;border:1px solid;border-color:#ffffff #696969 #696969 #ffffff;box-shadow:inset 1px 1px 0 #e3e3e3,inset -1px -1px 0 #a0a0a0;background:#f0f0f0;"></div>
<div class="a" style="left:1122px;top:12px;width:133px;height:18px;border:1px solid;border-color:#ffffff #696969 transparent #ffffff;box-shadow:inset 1px 1px 0 #e3e3e3,inset -1px 0 0 #a0a0a0;background:#f0f0f0"></div>
<div class="t" style="left:1126px;top:16px;color:#000;letter-spacing:-0.75px;">Flight installations, missiles</div>
<div class="a" style="left:1011px;top:10px;width:111px;height:21px;border:1px solid;border-color:#ffffff #696969 transparent #ffffff;box-shadow:inset 1px 1px 0 #e3e3e3,inset -1px 0 0 #a0a0a0;background:#f0f0f0"></div>
<div class="t" style="left:1018px;top:14px;color:#000;">Additional armament</div>
<div class="a" style="left:1024px;top:40px;width:312px;height:211px;border:1px solid #ffffff"></div>
<div class="a" style="left:1023px;top:39px;width:312px;height:211px;border:1px solid #a0a0a0"></div>
<div class="t" style="left:1030px;top:35px;padding:0 1px;background:#f0f0f0">Torpedoes</div>
<div class="a" style="left:1031px;top:62px;width:296px;height:112px;border:1px solid;border-color:#a0a0a0 #ffffff #ffffff #a0a0a0;box-shadow:inset 1px 1px 0 #696969,inset -1px -1px 0 #e3e3e3;background:#fff;"></div>
<div class="a" style="left:1033px;top:64px;width:149px;height:17px;border:1px solid;border-color:#ffffff #696969 #696969 #ffffff;box-shadow:inset 1px 1px 0 #e3e3e3,inset -1px -1px 0 #a0a0a0;background:#f0f0f0;"></div>
<div class="t" style="left:1039px;top:67px;color:#000;">Position</div>
<div class="a" style="left:1182px;top:64px;width:60px;height:17px;border:1px solid;border-color:#ffffff #696969 #696969 #ffffff;box-shadow:inset 1px 1px 0 #e3e3e3,inset -1px -1px 0 #a0a0a0;background:#f0f0f0;"></div>
<div class="t" style="left:1188px;top:67px;color:#000;">Tubes/...</div>
<div class="a" style="left:1242px;top:64px;width:81px;height:17px;border:1px solid;border-color:#ffffff #696969 #696969 #ffffff;box-shadow:inset 1px 1px 0 #e3e3e3,inset -1px -1px 0 #a0a0a0;background:#f0f0f0;"></div>
<div class="t" style="left:1248px;top:67px;color:#000;">Weight/mount</div>
<div class="a" style="left:1323px;top:64px;width:4px;height:17px;border-left:1px solid #ffffff;border-top:1px solid #ffffff;border-bottom:1px solid #696969;box-shadow:inset 0 -1px 0 #a0a0a0;background:#f0f0f0"></div>
<div class="t" style="left:1037px;top:84px;color:#000;">F - Port broadside swivel mo...</div>
<div class="t" style="left:1188px;top:84px;color:#000;">3</div>
<div class="t" style="left:1248px;top:84px;color:#000;">63</div>
<div class="t" style="left:1037px;top:98px;color:#000;">G - Starboard broadside swi...</div>
<div class="t" style="left:1188px;top:98px;color:#000;">3</div>
<div class="t" style="left:1248px;top:98px;color:#000;">63</div>
<div class="a" style="left:1031px;top:186px;width:74px;height:17px;border:1px solid;border-color:#ffffff #696969 #696969 #ffffff;box-shadow:inset 1px 1px 0 #e3e3e3,inset -1px -1px 0 #a0a0a0;background:#f0f0f0;"></div>
<div class="t" style="left:1031px;top:188px;width:74px;text-align:center;color:#000;">Add mount</div>
<div class="a" style="left:1143px;top:186px;width:74px;height:17px;border:1px solid;border-color:#ffffff #696969 #696969 #ffffff;box-shadow:inset 1px 1px 0 #e3e3e3,inset -1px -1px 0 #a0a0a0;background:#f0f0f0;"></div>
<div class="t" style="left:1143px;top:188px;width:74px;text-align:center;color:#000;">Delete mount</div>
<div class="a" style="left:1247px;top:186px;width:81px;height:17px;border:1px solid;border-color:#ffffff #696969 #696969 #ffffff;box-shadow:inset 1px 1px 0 #e3e3e3,inset -1px -1px 0 #a0a0a0;background:#f0f0f0;"></div>
<div class="t" style="left:1247px;top:188px;width:81px;text-align:center;color:#000;">Clear mounts</div>
<div class="a" style="left:1033px;top:224px;width:13px;height:13px;border:1px solid;border-color:#a0a0a0 #ffffff #ffffff #a0a0a0;box-shadow:inset 1px 1px 0 #696969,inset -1px -1px 0 #e3e3e3;background:#f0f0f0;"></div>
<div class="t" style="left:1051px;top:225px;color:#a0a0a0;text-shadow:1px 1px 0 #fff;">Torpedo reloads (above water tubes)</div>
<div class="a" style="left:1024px;top:269px;width:312px;height:134px;border:1px solid #ffffff"></div>
<div class="a" style="left:1023px;top:268px;width:312px;height:134px;border:1px solid #a0a0a0"></div>
<div class="t" style="left:1030px;top:264px;padding:0 1px;background:#f0f0f0">Anti Aircraft</div>
<div class="t" style="left:1032px;top:288px;color:#000;">AA positions used: 10 of 10</div>
<div class="t" style="left:1219px;top:299px;color:#000;">Weight</div>
<div class="t" style="left:1275px;top:298px;color:#000;">Cost</div>
<div class="t" style="left:1030px;top:316px;color:#000;">Light Anti Aircraft guns</div>
<div class="a" style="left:1159px;top:311px;width:48px;height:21px;border:1px solid;border-color:#a0a0a0 #ffffff #ffffff #a0a0a0;box-shadow:inset 1px 1px 0 #696969,inset -1px -1px 0 #e3e3e3;background:#fff;"></div>
<div class="a" style="left:1191px;top:313px;width:14px;height:8px;border:1px solid;border-color:#e3e3e3 #a0a0a0 #a0a0a0 #e3e3e3;box-shadow:inset 1px 1px 0 #ffffff,inset -1px -1px 0 #f0f0f0;background:#f0f0f0;"></div>
<div class="a" style="left:1198px;top:315px;width:1px;height:1px;background:#000;"></div>
<div class="a" style="left:1197px;top:316px;width:3px;height:1px;background:#000;"></div>
<div class="a" style="left:1196px;top:317px;width:5px;height:1px;background:#000;"></div>
<div class="a" style="left:1195px;top:318px;width:7px;height:1px;background:#000;"></div>
<div class="a" style="left:1191px;top:321px;width:14px;height:9px;border:1px solid;border-color:#ffffff #696969 #696969 #ffffff;box-shadow:inset 1px 1px 0 #f0f0f0,inset -1px -1px 0 #a0a0a0;background:#f0f0f0;"></div>
<div class="a" style="left:1195px;top:323px;width:7px;height:1px;background:#000;"></div>
<div class="a" style="left:1196px;top:324px;width:5px;height:1px;background:#000;"></div>
<div class="a" style="left:1197px;top:325px;width:3px;height:1px;background:#000;"></div>
<div class="a" style="left:1198px;top:326px;width:1px;height:1px;background:#000;"></div>
<div class="t" style="left:1163px;top:315px;color:#000;">5</div>
<div class="a" style="left:1217px;top:313px;width:47px;height:17px;border:1px solid;border-color:#a0a0a0 #ffffff #ffffff #a0a0a0;background:#f0f0f0"></div>
<div class="t" style="right:102px;top:315px;color:#000">6</div>
<div class="a" style="left:1271px;top:313px;width:49px;height:17px;border:1px solid;border-color:#a0a0a0 #ffffff #ffffff #a0a0a0;background:#f0f0f0"></div>
<div class="t" style="right:46px;top:315px;color:#000">0</div>
<div class="t" style="left:1030px;top:346px;color:#000;">Medium Anti Aircraft guns</div>
<div class="a" style="left:1159px;top:341px;width:48px;height:21px;border:1px solid;border-color:#a0a0a0 #ffffff #ffffff #a0a0a0;box-shadow:inset 1px 1px 0 #696969,inset -1px -1px 0 #e3e3e3;background:#fff;"></div>
<div class="a" style="left:1191px;top:343px;width:14px;height:8px;border:1px solid;border-color:#e3e3e3 #a0a0a0 #a0a0a0 #e3e3e3;box-shadow:inset 1px 1px 0 #ffffff,inset -1px -1px 0 #f0f0f0;background:#f0f0f0;"></div>
<div class="a" style="left:1198px;top:345px;width:1px;height:1px;background:#000;"></div>
<div class="a" style="left:1197px;top:346px;width:3px;height:1px;background:#000;"></div>
<div class="a" style="left:1196px;top:347px;width:5px;height:1px;background:#000;"></div>
<div class="a" style="left:1195px;top:348px;width:7px;height:1px;background:#000;"></div>
<div class="a" style="left:1191px;top:351px;width:14px;height:9px;border:1px solid;border-color:#ffffff #696969 #696969 #ffffff;box-shadow:inset 1px 1px 0 #f0f0f0,inset -1px -1px 0 #a0a0a0;background:#f0f0f0;"></div>
<div class="a" style="left:1195px;top:353px;width:7px;height:1px;background:#000;"></div>
<div class="a" style="left:1196px;top:354px;width:5px;height:1px;background:#000;"></div>
<div class="a" style="left:1197px;top:355px;width:3px;height:1px;background:#000;"></div>
<div class="a" style="left:1198px;top:356px;width:1px;height:1px;background:#000;"></div>
<div class="t" style="left:1163px;top:345px;color:#6d6d6d;">0</div>
<div class="a" style="left:1217px;top:343px;width:47px;height:17px;border:1px solid;border-color:#a0a0a0 #ffffff #ffffff #a0a0a0;background:#f0f0f0"></div>
<div class="t" style="right:102px;top:345px;color:#000">0</div>
<div class="a" style="left:1271px;top:343px;width:49px;height:17px;border:1px solid;border-color:#a0a0a0 #ffffff #ffffff #a0a0a0;background:#f0f0f0"></div>
<div class="t" style="right:46px;top:345px;color:#000">0</div>
<div class="t" style="left:1030px;top:374px;color:#000;">AA directors</div>
<div class="a" style="left:1159px;top:370px;width:48px;height:21px;border:1px solid;border-color:#a0a0a0 #ffffff #ffffff #a0a0a0;box-shadow:inset 1px 1px 0 #696969,inset -1px -1px 0 #e3e3e3;background:#fff;"></div>
<div class="a" style="left:1191px;top:372px;width:14px;height:8px;border:1px solid;border-color:#e3e3e3 #a0a0a0 #a0a0a0 #e3e3e3;box-shadow:inset 1px 1px 0 #ffffff,inset -1px -1px 0 #f0f0f0;background:#f0f0f0;"></div>
<div class="a" style="left:1198px;top:374px;width:1px;height:1px;background:#000;"></div>
<div class="a" style="left:1197px;top:375px;width:3px;height:1px;background:#000;"></div>
<div class="a" style="left:1196px;top:376px;width:5px;height:1px;background:#000;"></div>
<div class="a" style="left:1195px;top:377px;width:7px;height:1px;background:#000;"></div>
<div class="a" style="left:1191px;top:380px;width:14px;height:9px;border:1px solid;border-color:#ffffff #696969 #696969 #ffffff;box-shadow:inset 1px 1px 0 #f0f0f0,inset -1px -1px 0 #a0a0a0;background:#f0f0f0;"></div>
<div class="a" style="left:1195px;top:382px;width:7px;height:1px;background:#000;"></div>
<div class="a" style="left:1196px;top:383px;width:5px;height:1px;background:#000;"></div>
<div class="a" style="left:1197px;top:384px;width:3px;height:1px;background:#000;"></div>
<div class="a" style="left:1198px;top:385px;width:1px;height:1px;background:#000;"></div>
<div class="t" style="left:1163px;top:374px;color:#6d6d6d;">0</div>
<div class="a" style="left:1217px;top:372px;width:47px;height:17px;border:1px solid;border-color:#a0a0a0 #ffffff #ffffff #a0a0a0;background:#f0f0f0"></div>
<div class="t" style="right:102px;top:374px;color:#000">0</div>
<div class="a" style="left:1271px;top:372px;width:49px;height:17px;border:1px solid;border-color:#a0a0a0 #ffffff #ffffff #a0a0a0;background:#f0f0f0"></div>
<div class="t" style="right:46px;top:374px;color:#000">0</div>
<div class="a" style="left:1024px;top:416px;width:312px;height:81px;border:1px solid #ffffff"></div>
<div class="a" style="left:1023px;top:415px;width:312px;height:81px;border:1px solid #a0a0a0"></div>
<div class="t" style="left:1030px;top:411px;padding:0 1px;background:#f0f0f0">Mine warfare</div>
<div class="t" style="left:1030px;top:433px;color:#000;">Mines (max 42)</div>
<div class="a" style="left:1119px;top:429px;width:48px;height:21px;border:1px solid;border-color:#a0a0a0 #ffffff #ffffff #a0a0a0;box-shadow:inset 1px 1px 0 #696969,inset -1px -1px 0 #e3e3e3;background:#fff;"></div>
<div class="a" style="left:1151px;top:431px;width:14px;height:8px;border:1px solid;border-color:#e3e3e3 #a0a0a0 #a0a0a0 #e3e3e3;box-shadow:inset 1px 1px 0 #ffffff,inset -1px -1px 0 #f0f0f0;background:#f0f0f0;"></div>
<div class="a" style="left:1158px;top:433px;width:1px;height:1px;background:#000;"></div>
<div class="a" style="left:1157px;top:434px;width:3px;height:1px;background:#000;"></div>
<div class="a" style="left:1156px;top:435px;width:5px;height:1px;background:#000;"></div>
<div class="a" style="left:1155px;top:436px;width:7px;height:1px;background:#000;"></div>
<div class="a" style="left:1151px;top:439px;width:14px;height:9px;border:1px solid;border-color:#ffffff #696969 #696969 #ffffff;box-shadow:inset 1px 1px 0 #f0f0f0,inset -1px -1px 0 #a0a0a0;background:#f0f0f0;"></div>
<div class="a" style="left:1155px;top:441px;width:7px;height:1px;background:#000;"></div>
<div class="a" style="left:1156px;top:442px;width:5px;height:1px;background:#000;"></div>
<div class="a" style="left:1157px;top:443px;width:3px;height:1px;background:#000;"></div>
<div class="a" style="left:1158px;top:444px;width:1px;height:1px;background:#000;"></div>
<div class="t" style="left:1123px;top:433px;color:#000;">42</div>
<div class="t" style="left:1032px;top:467px;color:#000;">Minesweeping gear</div>
<div class="a" style="left:1147px;top:467px;width:13px;height:13px;border:1px solid;border-color:#a0a0a0 #ffffff #ffffff #a0a0a0;box-shadow:inset 1px 1px 0 #696969,inset -1px -1px 0 #e3e3e3;background:#fff;"></div>
<div class="a" style="left:1185px;top:465px;width:60px;height:17px;border:1px solid;border-color:#a0a0a0 #ffffff #ffffff #a0a0a0;background:#f0f0f0"></div>
<div class="t" style="right:121px;top:467px;color:#000">0</div>
<div class="a" style="left:1271px;top:463px;width:49px;height:17px;border:1px solid;border-color:#a0a0a0 #ffffff #ffffff #a0a0a0;background:#f0f0f0"></div>
<div class="t" style="right:46px;top:465px;color:#000">0</div>
<div class="a" style="left:1024px;top:512px;width:312px;height:123px;border:1px solid #ffffff"></div>
<div class="a" style="left:1023px;top:511px;width:312px;height:123px;border:1px solid #a0a0a0"></div>
<div class="t" style="left:1030px;top:507px;padding:0 1px;background:#f0f0f0">ASW</div>
<div class="t" style="left:1195px;top:523px;color:#000;">Weight</div>
<div class="t" style="left:1275px;top:519px;color:#000;">Cost</div>
<div class="t" style="left:1030px;top:536px;color:#000;">K-guns</div>
<div class="a" style="left:1119px;top:533px;width:48px;height:21px;border:1px solid;border-color:#a0a0a0 #ffffff #ffffff #a0a0a0;box-shadow:inset 1px 1px 0 #696969,inset -1px -1px 0 #e3e3e3;background:#fff;"></div>
<div class="a" style="left:1151px;top:535px;width:14px;height:8px;border:1px solid;border-color:#e3e3e3 #a0a0a0 #a0a0a0 #e3e3e3;box-shadow:inset 1px 1px 0 #ffffff,inset -1px -1px 0 #f0f0f0;background:#f0f0f0;"></div>
<div class="a" style="left:1158px;top:537px;width:1px;height:1px;background:#000;"></div>
<div class="a" style="left:1157px;top:538px;width:3px;height:1px;background:#000;"></div>
<div class="a" style="left:1156px;top:539px;width:5px;height:1px;background:#000;"></div>
<div class="a" style="left:1155px;top:540px;width:7px;height:1px;background:#000;"></div>
<div class="a" style="left:1151px;top:543px;width:14px;height:9px;border:1px solid;border-color:#ffffff #696969 #696969 #ffffff;box-shadow:inset 1px 1px 0 #f0f0f0,inset -1px -1px 0 #a0a0a0;background:#f0f0f0;"></div>
<div class="a" style="left:1155px;top:545px;width:7px;height:1px;background:#000;"></div>
<div class="a" style="left:1156px;top:546px;width:5px;height:1px;background:#000;"></div>
<div class="a" style="left:1157px;top:547px;width:3px;height:1px;background:#000;"></div>
<div class="a" style="left:1158px;top:548px;width:1px;height:1px;background:#000;"></div>
<div class="t" style="left:1123px;top:537px;color:#6d6d6d;">0</div>
<div class="a" style="left:1185px;top:537px;width:60px;height:17px;border:1px solid;border-color:#a0a0a0 #ffffff #ffffff #a0a0a0;background:#f0f0f0"></div>
<div class="t" style="right:121px;top:539px;color:#000">0</div>
<div class="a" style="left:1271px;top:535px;width:49px;height:17px;border:1px solid;border-color:#a0a0a0 #ffffff #ffffff #a0a0a0;background:#f0f0f0"></div>
<div class="t" style="right:46px;top:537px;color:#000">0</div>
<div class="t" style="left:1032px;top:569px;color:#a0a0a0;text-shadow:1px 1px 0 #fff;">Forward ASW mortar</div>
<div class="a" style="left:1147px;top:568px;width:13px;height:13px;border:1px solid;border-color:#a0a0a0 #ffffff #ffffff #a0a0a0;box-shadow:inset 1px 1px 0 #696969,inset -1px -1px 0 #e3e3e3;background:#f0f0f0;"></div>
<div class="a" style="left:1185px;top:569px;width:60px;height:17px;border:1px solid;border-color:#a0a0a0 #ffffff #ffffff #a0a0a0;background:#f0f0f0"></div>
<div class="t" style="right:121px;top:571px;color:#000">0</div>
<div class="a" style="left:1271px;top:567px;width:49px;height:17px;border:1px solid;border-color:#a0a0a0 #ffffff #ffffff #a0a0a0;background:#f0f0f0"></div>
<div class="t" style="right:46px;top:569px;color:#000">0</div>
<div class="t" style="left:1032px;top:600px;color:#a0a0a0;text-shadow:1px 1px 0 #fff;">Increased DC storage</div>
<div class="a" style="left:1147px;top:600px;width:13px;height:13px;border:1px solid;border-color:#a0a0a0 #ffffff #ffffff #a0a0a0;box-shadow:inset 1px 1px 0 #696969,inset -1px -1px 0 #e3e3e3;background:#f0f0f0;"></div>
<div class="a" style="left:1185px;top:601px;width:60px;height:17px;border:1px solid;border-color:#a0a0a0 #ffffff #ffffff #a0a0a0;background:#f0f0f0"></div>
<div class="t" style="right:121px;top:603px;color:#000">0</div>
<div class="a" style="left:1271px;top:599px;width:49px;height:17px;border:1px solid;border-color:#a0a0a0 #ffffff #ffffff #a0a0a0;background:#f0f0f0"></div>
<div class="t" style="right:46px;top:601px;color:#000">0</div>
</div></body></html>
